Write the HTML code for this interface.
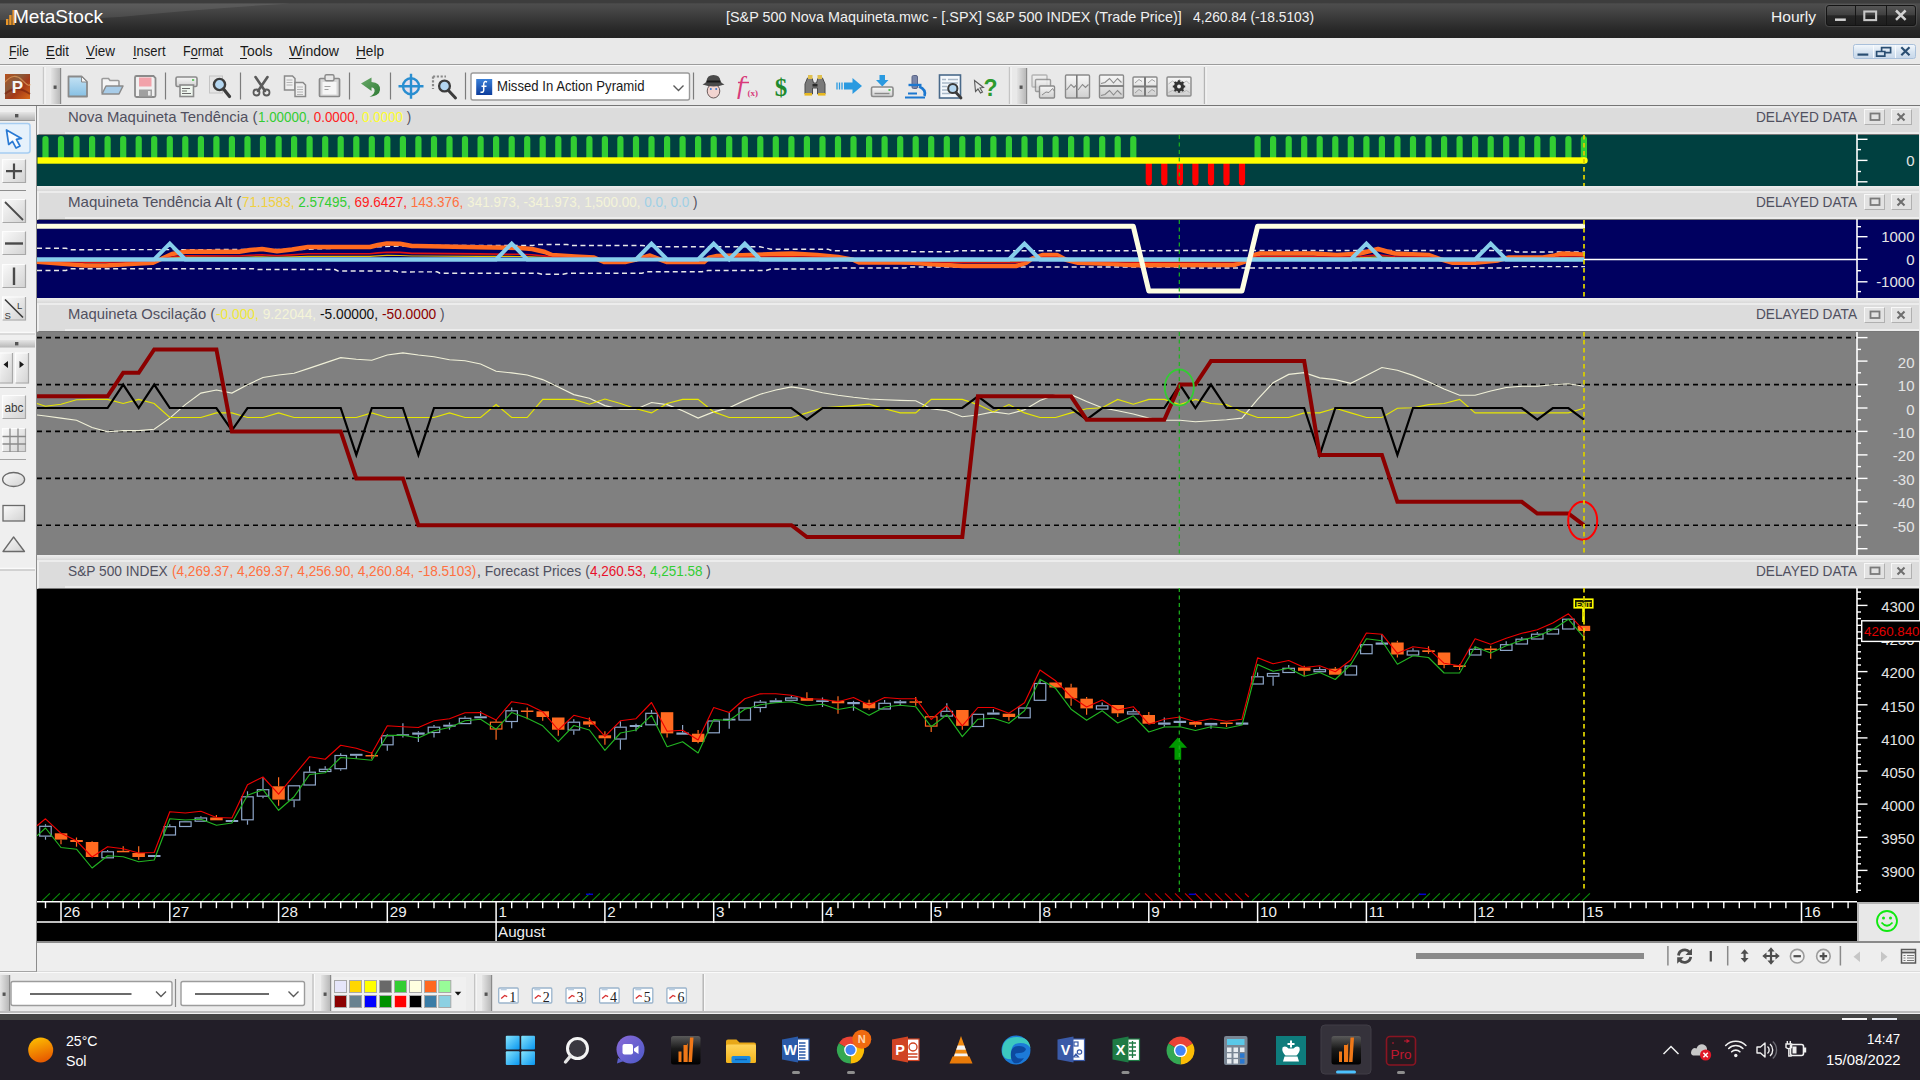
<!DOCTYPE html><html><head><meta charset="utf-8"><title>MetaStock</title><style>.fit{position:absolute;white-space:nowrap;transform-origin:0 50%;line-height:1.15}
*{box-sizing:border-box}
html,body{margin:0;padding:0}
body{width:1920px;height:1080px;overflow:hidden;background:#f0f0f0;font-family:"Liberation Sans",sans-serif;position:relative}
.abs{position:absolute}
#title{left:0;top:0;width:1920px;height:38px;background:linear-gradient(#3d3d3d 0,#3d3d3d 2.5px,#4d4d4d 4px,#474747 9px,#3b3b3b 17px,#303030 24px,#282828 30px,#232323 38px)}
#menu{left:0;top:38px;width:1920px;height:26.6px;background:#e9e9e9;border-bottom:1.3px solid #9c9c9c}
#menu u{text-decoration:underline;text-underline-offset:2px}
#tb{left:0;top:64.6px;width:1920px;height:41.4px;background:#e9e9e9;border-top:1px solid #f8f8f8;border-bottom:1.8px solid #757575}
#left{left:0;top:105.5px;width:37px;height:866px;background:#efefef;border-right:1.6px solid #8c8c8c;border-bottom:1px solid #a4a4a4}
.ph{left:37px;width:1881.5px;background:#dcdcdc}
.phi{left:37px;width:1881.5px;height:28.8px;background:#dcdcdc;border-top:2px solid #ececec;border-left:2px solid #efefef;border-bottom:1px solid #787878}
.phi i{position:absolute;left:26px;right:0;bottom:0;height:1.6px;background:#ececec}
.pbtn{position:absolute;top:4px;width:21px;height:16px;border:1px solid #f8f8f8;border-right-color:#b0b0b0;border-bottom-color:#b0b0b0;background:#e2e2e2}
.pb{left:37px;width:1881.5px}
#task{left:0;top:1019px;width:1920px;height:61px;background:#221e28}
</style></head><body><div id="title" class="abs"><svg class="abs" style="left:0;top:0" width="300" height="38"><path d="M0 3.5H290Q200 9 120 17Q60 21 0 20Z" fill="#fff" opacity="0.085"/></svg><svg class="abs" style="left:6px;top:10px" width="10" height="15"><rect x="0" y="9" width="2.4" height="6" fill="#e8962a"/><rect x="3.2" y="5" width="2.4" height="10" fill="#e8962a"/><rect x="6.4" y="0" width="2.4" height="15" fill="#e8962a"/></svg><span id="t_ms" class="fit" style="left:12.5px;top:5.5px;font-size:19.00px;color:#fff;transform:scaleX(1.0026);">MetaStock</span><span id="t_ttl" class="fit" style="left:726.0px;top:8.5px;font-size:14.50px;color:#f0f0f0;transform:scaleX(0.9909);">[S&amp;P 500 Nova Maquineta.mwc - [.SPX] S&amp;P 500 INDEX (Trade Price)]</span><span id="t_ttl2" class="fit" style="left:1193.3px;top:8.5px;font-size:14.50px;color:#f0f0f0;transform:scaleX(0.9500);">4,260.84 (-18.5103)</span><span id="t_hr" class="fit" style="left:1771.0px;top:8.5px;font-size:14.50px;color:#f0f0f0;transform:scaleX(1.0738);">Hourly</span><div class="abs" style="left:1826.3px;top:5.3px;width:89.4px;height:20.8px;background:linear-gradient(#565656,#404040 45%,#262626 52%,#1e1e1e);border:1px solid #141414;border-radius:3px;box-shadow:0 0 0 1px rgba(110,110,110,.35)"></div><div class="abs" style="left:1855px;top:6.3px;width:1.2px;height:19px;background:#161616"></div><div class="abs" style="left:1885.6px;top:6.3px;width:1.2px;height:19px;background:#161616"></div><svg class="abs" style="left:1826px;top:5px" width="90" height="22"><path d="M9 14.7H19.800" stroke="#d2d2d2" stroke-width="2.500"/><rect x="38.300" y="6.500" width="11.800" height="8.600" fill="none" stroke="#c8c8c8" stroke-width="2.100"/><path d="M70 5.500L79.600 14.800M79.600 5.500L70 14.800" stroke="#d2d2d2" stroke-width="2.500"/></svg></div><div id="menu" class="abs"><span id="m_File" class="fit" style="left:9.0px;top:4.5px;font-size:14.50px;color:#1a1a1a;transform:scaleX(0.8556);"><u>F</u>ile</span><span id="m_Edit" class="fit" style="left:46.0px;top:4.5px;font-size:14.50px;color:#1a1a1a;transform:scaleX(0.9200);"><u>E</u>dit</span><span id="m_View" class="fit" style="left:86.0px;top:4.5px;font-size:14.50px;color:#1a1a1a;transform:scaleX(0.9299);"><u>V</u>iew</span><span id="m_Insert" class="fit" style="left:132.5px;top:4.5px;font-size:14.50px;color:#1a1a1a;transform:scaleX(0.8958);"><u>I</u>nsert</span><span id="m_Format" class="fit" style="left:183.0px;top:4.5px;font-size:14.50px;color:#1a1a1a;transform:scaleX(0.8707);">F<u>o</u>rmat</span><span id="m_Tools" class="fit" style="left:240.0px;top:4.5px;font-size:14.50px;color:#1a1a1a;transform:scaleX(0.9599);"><u>T</u>ools</span><span id="m_Window" class="fit" style="left:289.0px;top:4.5px;font-size:14.50px;color:#1a1a1a;transform:scaleX(0.9694);"><u>W</u>indow</span><span id="m_Help" class="fit" style="left:356.0px;top:4.5px;font-size:14.50px;color:#1a1a1a;transform:scaleX(0.9382);"><u>H</u>elp</span><div class="abs" style="left:1852.5px;top:6.2px;width:63.4px;height:15.2px;border:1px solid #a9c0da;border-radius:2.5px;background:linear-gradient(#f2f7fc,#d6e3f0 55%,#c8d8ea)"></div><div class="abs" style="left:1872.6px;top:7.2px;width:1px;height:13.2px;background:#f8fbfe"></div><div class="abs" style="left:1895px;top:7.2px;width:1px;height:13.2px;background:#f8fbfe"></div><svg class="abs" style="left:1852px;top:6px" width="66" height="16"><path d="M5.500 10.600H16.300" stroke="#2a4e72" stroke-width="2.200"/><path d="M24.600 7.500h8.200v4.600h-8.200z M29.600 7V3.600h9v5h-5.300" fill="none" stroke="#2a4e72" stroke-width="1.700"/><path d="M49.300 3.300L57.500 11.200M57.500 3.300L49.300 11.200" stroke="#2a4e72" stroke-width="2.200"/></svg></div><div id="tb" class="abs"></div><svg class="abs" style="left:0;top:65px" width="1920" height="40" viewBox="0 65 1920 40"><defs><linearGradient id="gP" x1="0" y1="0" x2="1" y2="1"><stop offset="0" stop-color="#b8501c"/><stop offset="0.35" stop-color="#8a5a3a"/><stop offset="0.6" stop-color="#a43818"/><stop offset="1" stop-color="#d86a1a"/></linearGradient><linearGradient id="gGrip" x1="0" y1="0" x2="1" y2="0"><stop offset="0" stop-color="#e4e4e4"/><stop offset="1" stop-color="#b8b8b8"/></linearGradient><linearGradient id="gBlue" x1="0" y1="0" x2="0" y2="1"><stop offset="0" stop-color="#c4e2f4"/><stop offset="1" stop-color="#86c0e4"/></linearGradient><linearGradient id="gGray" x1="0" y1="0" x2="0" y2="1"><stop offset="0" stop-color="#f8f8f8"/><stop offset="1" stop-color="#cfcfcf"/></linearGradient><linearGradient id="gGreen" x1="0" y1="0" x2="1" y2="1"><stop offset="0" stop-color="#6aaa6a"/><stop offset="1" stop-color="#2e7a34"/></linearGradient><linearGradient id="gF" x1="0" y1="0" x2="0" y2="1"><stop offset="0" stop-color="#3a80d8"/><stop offset="1" stop-color="#0c3c9c"/></linearGradient></defs><rect x="5" y="74" width="25" height="25" fill="url(#gP)"/><path d="M5 82Q14 72 22 80T30 84" fill="none" stroke="#e0a060" stroke-width="1.2" opacity=".7"/><path d="M5 94Q16 84 30 94" fill="none" stroke="#7a2410" stroke-width="2" opacity=".7"/><text x="17.5" y="93" font-size="17" font-weight="bold" fill="#f4f4f4" text-anchor="middle" font-family="Liberation Sans">P</text><path d="M43.5 67V104" stroke="#c8c8c8" stroke-width="1.4"/><path d="M45 67V104" stroke="#fafafa" stroke-width="1"/><rect x="51" y="68" width="9" height="36" fill="url(#gGrip)"/><rect x="53.6" y="85.5" width="3" height="3.4" fill="#555"/><path d="M60.6 68V104" stroke="#8a8a8a" stroke-width="1.2"/><path d="M68.5 76.5h13l5.5 5.5v14.5h-18.5z" fill="url(#gBlue)" stroke="#8a8a8a" stroke-width="1.8" stroke-linejoin="round"/><path d="M81.5 76.5v5.5h5.5z" fill="#f4f4f4" stroke="#8a8a8a" stroke-width="1"/><path d="M102 93V79.5q0-1 1-1h5.5l1.5 2h8q1 0 1 1V86" fill="#f4f4f4" stroke="#9a9a9a" stroke-width="1.6"/><path d="M102 94l4-8h17l-4 8z" fill="#a8cce8" stroke="#8a8a8a" stroke-width="1.5" stroke-linejoin="round"/><path d="M135 77.5q0-1.5 1.5-1.5h17l2 2v17.5q0 1.5-1.5 1.5h-17.5q-1.5 0-1.5-1.5z" fill="#f0f0f0" stroke="#8a8a8a" stroke-width="1.8"/><rect x="139" y="77.5" width="12.5" height="9" fill="#f2a2aa"/><rect x="139" y="89.5" width="13" height="7" fill="#a0a0a0"/><rect x="148" y="91" width="2.5" height="4.5" fill="#e8e8e8"/><path d="M165.5 72.5V99.5" stroke="#7c7c7c" stroke-width="1.2"/><rect x="176" y="77" width="21" height="9.5" rx="1.5" fill="url(#gGray)" stroke="#8a8a8a" stroke-width="1.6"/><rect x="180" y="85" width="13.5" height="11.5" fill="#eef6ee" stroke="#8a8a8a" stroke-width="1.6"/><path d="M182 88.5h8M182 91h5M182 93.5h9" stroke="#6a6a6a" stroke-width="1.1"/><rect x="192" y="79" width="2.2" height="2" fill="#6cc46c"/><rect x="209.5" y="76" width="13" height="17" fill="#e4e4e4" stroke="#c4c4c4" stroke-width="1"/><circle cx="219.5" cy="84.5" r="5.6" fill="#b4d6f0" stroke="#3c3c3c" stroke-width="2.4"/><path d="M223.5 89L229.5 96.5" stroke="#3c3c3c" stroke-width="3.2" stroke-linecap="round"/><path d="M240.5 72.5V99.5" stroke="#7c7c7c" stroke-width="1.2"/><path d="M255.5 77L265 91M267.5 77L258 91" stroke="#5a5a5a" stroke-width="2.6" stroke-linecap="round"/><circle cx="256.5" cy="92.5" r="3" fill="none" stroke="#5a5a5a" stroke-width="1.8"/><circle cx="266.5" cy="92.5" r="3" fill="none" stroke="#5a5a5a" stroke-width="1.8"/><path d="M284.5 76h8l2.5 2.5v11.5h-10.5z" fill="#efefef" stroke="#8a8a8a" stroke-width="1.5"/><path d="M286.5 80h6M286.5 82.5h6M286.5 85h6" stroke="#b4b4b4" stroke-width="1"/><path d="M295 82.5h8l2.5 2.5v11.5h-10.5z" fill="#efefef" stroke="#8a8a8a" stroke-width="1.5"/><path d="M297 87h6M297 89.500h6M297 92h6M297 94.500h6" stroke="#b4b4b4" stroke-width="1"/><rect x="319.500" y="78.500" width="20" height="18" rx="1" fill="#d8d8d8" stroke="#8a8a8a" stroke-width="1.7"/><rect x="322.500" y="82" width="14" height="12.500" fill="#f6f6f6"/><rect x="325" y="74.800" width="9" height="6" rx="1.5" fill="#e8e8e8" stroke="#8a8a8a" stroke-width="1.4"/><path d="M324.500 86.500h6M324.500 89.500h4" stroke="#a0a0a0" stroke-width="1.1"/><path d="M349.5 72.5V99.5" stroke="#7c7c7c" stroke-width="1.2"/><path d="M361 83.500L371.500 77.500V82Q380.500 82.500 380 90Q379.500 95.500 369.500 97Q375.500 93.500 374.500 89.500Q373.500 87 371.500 87.500V91Z" fill="url(#gGreen)"/><path d="M390.5 72.5V99.5" stroke="#7c7c7c" stroke-width="1.2"/><circle cx="411" cy="86.300" r="8" fill="#e8e0ec" stroke="#2a8ed0" stroke-width="2.400"/><path d="M411 73.800V98.800M398.500 86.300H423.500" stroke="#2a8ed0" stroke-width="2.400"/><path d="M433 76.500h13M433 76.500v12.500" stroke="#8a8a8a" stroke-width="2.200" stroke-dasharray="2.200 1.600"/><circle cx="444.500" cy="86" r="5.400" fill="#b4d6f0" stroke="#3c3c3c" stroke-width="2.300"/><path d="M448.500 90.500L455.500 98" stroke="#3c3c3c" stroke-width="3" stroke-linecap="round"/><path d="M465.5 72.5V99.5" stroke="#7c7c7c" stroke-width="1.2"/><rect x="471" y="73" width="218.500" height="27" rx="2" fill="#fff" stroke="#9a9a9a" stroke-width="1.400"/><rect x="476.200" y="79" width="16" height="16" fill="url(#gF)"/><path d="M487 82Q483.500 80.500 483.700 85V90Q483.700 93 480.500 92M481.500 86.300h5" fill="none" stroke="#fff" stroke-width="1.500"/><path d="M673.500 85.500L678.500 90.500L683.500 85.500" fill="none" stroke="#5a5a5a" stroke-width="1.400"/><path d="M693.5 72.5V99.5" stroke="#7c7c7c" stroke-width="1.2"/><ellipse cx="713.500" cy="91" rx="6.300" ry="7" fill="#f2d4d0" stroke="#6a5a5a" stroke-width="1"/><path d="M702.500 84.500Q713.500 88.500 724.500 84.500Q721 83 720.500 81Q720 75 713.500 75Q707 75 706.500 81Q706 83 702.500 84.500Z" fill="#4a4a4a"/><path d="M706.800 81.500h13.500" stroke="#1a1a1a" stroke-width="2"/><circle cx="710.800" cy="89" r="1" fill="#3a7ad0"/><circle cx="716.200" cy="89" r="1" fill="#3a7ad0"/><text x="737" y="94" font-size="26" font-style="italic" fill="#d83a7a" font-family="Liberation Serif">f</text><text x="747.500" y="96" font-size="9" font-weight="bold" fill="#d83a7a" font-family="Liberation Serif">(x)</text><path d="M738 82.500h11" stroke="#d83a7a" stroke-width="1.500"/><text x="781" y="95.500" font-size="25" font-weight="bold" fill="#1e8a2e" text-anchor="middle" font-family="Liberation Serif">$</text><path d="M805 94V84l2.500-6h4.500l1.500 5h3l1.500-5h4.500l2.500 6v10h-7.500v-6h-5v6z" fill="#7a7a7a" stroke="#4a4a4a" stroke-width="1"/><rect x="808" y="75" width="4.500" height="4" fill="#e0c050"/><rect x="817.500" y="75" width="4.500" height="4" fill="#e0c050"/><rect x="804.500" y="93" width="7.500" height="2.600" fill="#e8b820"/><rect x="818" y="93" width="7.500" height="2.600" fill="#e8b820"/><rect x="812.500" y="84" width="5" height="2.500" fill="#2a2a2a"/><path d="M844 82.500h8.500v-4.500l9.500 8l-9.500 8v-4.500h-8.500z" fill="#2a9ae0"/><path d="M837 82.500v7M839.500 82.500v7M842 82.500v7" stroke="#2a9ae0" stroke-width="1.300"/><path d="M879.500 75h5.500v5h3.500l-6.200 6.500l-6.300-6.500h3.500z" fill="#2a9ae0"/><rect x="871.500" y="87" width="21.500" height="9.500" rx="1.500" fill="url(#gGray)" stroke="#8a8a8a" stroke-width="1.600"/><path d="M874.500 93.500h15" stroke="#8a8a8a" stroke-width="1.400"/><rect x="888.500" y="89" width="2" height="2" fill="#5cc45c"/><rect x="912" y="75.500" width="5.500" height="13" rx="1.500" fill="#7a86a8" stroke="#5a6488" stroke-width="1"/><path d="M908.500 85h13" stroke="#1c78d0" stroke-width="2.400"/><path d="M919 86.500Q926.500 89.500 924.500 96" fill="none" stroke="#1c78d0" stroke-width="2.600"/><path d="M905 97.500h20M908 93.500h9" stroke="#1c78d0" stroke-width="2.200"/><rect x="939.500" y="75" width="21" height="23" fill="#f4f8fc" stroke="#4a6a8a" stroke-width="1.600"/><path d="M942 79.500h4M948 79.500h10M942 83h16M942 86.500h5M942 90h6M942 93.500h8" stroke="#a8b8c8" stroke-width="1.300"/><circle cx="952.800" cy="88.500" r="4.600" fill="#b4d6f0" stroke="#3c3c3c" stroke-width="2"/><path d="M956 92.500L961 98" stroke="#3c3c3c" stroke-width="2.800" stroke-linecap="round"/><path d="M974.500 80.500l1 11l2.500-2.500l2.500 4l2-1l-2.500-4l3.500-.5z" fill="#e8e8e8" stroke="#5a5a5a" stroke-width="1.100"/><text x="990.500" y="96" font-size="23" font-weight="bold" fill="#2e9a2e" text-anchor="middle" font-family="Liberation Sans">?</text><path d="M1009.500 67V104" stroke="#c4c4c4" stroke-width="1.400"/><path d="M1011 67V104" stroke="#fafafa" stroke-width="1"/><rect x="1017" y="68" width="9" height="36" fill="url(#gGrip)"/><rect x="1019.6" y="85.5" width="3" height="3.4" fill="#555"/><path d="M1026.6 68V104" stroke="#8a8a8a" stroke-width="1.2"/><rect x="1032.0" y="75.0" width="15.0" height="12.0" rx="1" fill="url(#gGray)" stroke="#8a8a8a" stroke-width="1.400" opacity="0.55"/><rect x="1035.5" y="79.5" width="15.0" height="12.0" rx="1" fill="url(#gGray)" stroke="#8a8a8a" stroke-width="1.400" opacity="0.80"/><rect x="1039.5" y="86.0" width="15.0" height="12.0" rx="1" fill="url(#gGray)" stroke="#8a8a8a" stroke-width="1.400" opacity="1.00"/><path d="M1042 95l4-3l3 .5l3.500-4l2 3" fill="none" stroke="#8a8a8a" stroke-width="1"/><rect x="1065.5" y="75.0" width="24.0" height="23.0" rx="1" fill="url(#gGray)" stroke="#8a8a8a" stroke-width="1.400" opacity="1.00"/><path d="M1076.800 75v23" stroke="#7a7a7a" stroke-width="1.600"/><path d="M1066.500 90l4.500-5.500l3 3l2.500-2.500M1078 90l4.500-5.500l3 3l3-3" fill="none" stroke="#8a8a8a" stroke-width="1.100"/><rect x="1099.5" y="75.0" width="24.0" height="23.0" rx="1" fill="url(#gGray)" stroke="#8a8a8a" stroke-width="1.400" opacity="1.00"/><path d="M1099.500 86h24" stroke="#7a7a7a" stroke-width="1.800"/><path d="M1101 83.500l4-1l4.500-4l4 4.500l4-4.500l4 4M1101 95.500l4-1l4.500-4l4 4.500l4-4.500l4 4" fill="none" stroke="#8a8a8a" stroke-width="1.100"/><rect x="1133.0" y="77.0" width="24.0" height="19.0" rx="1" fill="url(#gGray)" stroke="#8a8a8a" stroke-width="1.400" opacity="1.00"/><path d="M1145 77v19M1133 86.500h24" stroke="#7a7a7a" stroke-width="2"/><path d="M1135 83l4-3.500l3 2M1148 83l4-3.500l3 2M1135 93l4-3.500l3 2M1148 93l4-3.500l3 2" fill="none" stroke="#a0a0a0" stroke-width="1"/><rect x="1167.0" y="77.0" width="24.0" height="19.0" rx="1" fill="url(#gGray)" stroke="#8a8a8a" stroke-width="1.400" opacity="1.00"/><path d="M1168.5 84l4-3l3 2l4-3.500l4 3.500l3-2l3 3M1168.5 92.5l4-2l3 1.5h8l3-1.5l3 2" fill="none" stroke="#b4b4b4" stroke-width="1"/><circle cx="1179" cy="86.500" r="3.800" fill="none" stroke="#333" stroke-width="2.600"/><path d="M1179 80.300v12.400M1172.800 86.500h12.400M1174.600 82.100l8.800 8.800M1183.400 82.100l-8.800 8.800" stroke="#333" stroke-width="2.100"/><circle cx="1179" cy="86.500" r="1.900" fill="#ececec"/><path d="M1204.500 67V104" stroke="#b4b4b4" stroke-width="1.400"/><path d="M1206 67V104" stroke="#fafafa" stroke-width="1"/></svg><span id="cb" class="fit" style="left:496.5px;top:78.0px;font-size:14.50px;color:#1a1a1a;transform:scaleX(0.9060);">Missed In Action Pyramid</span><div id="left" class="abs"></div><svg class="abs" style="left:0;top:105px" width="37" height="867" viewBox="0 105 37 867"><defs><linearGradient id="gBtn" x1="0" y1="0" x2="1" y2="1"><stop offset="0" stop-color="#fafafa"/><stop offset="1" stop-color="#d2d2d2"/></linearGradient><linearGradient id="gGr2" x1="0" y1="0" x2="0" y2="1"><stop offset="0" stop-color="#e6e6e6"/><stop offset="1" stop-color="#b6b6b6"/></linearGradient></defs><rect x="0" y="112" width="35" height="8" fill="url(#gGr2)"/><rect x="15" y="114" width="3.400" height="3.400" fill="#555"/><path d="M0 120.500H35" stroke="#9a9a9a" stroke-width="1"/><rect x="-2" y="123.500" width="32" height="29.500" rx="2.500" fill="#e6f1fb" stroke="#a6cdf2" stroke-width="1.500"/><path d="M6.500 130l2.200 14.500l3.800-3.200l3.600 6.800l3.900-2.100l-3.600-6.600l5.100-1z" fill="#f8fcff" stroke="#2a7ad4" stroke-width="1.700" stroke-linejoin="round"/><rect x="2.0" y="159.0" width="24.0" height="24.0" fill="url(#gBtn)"/><path d="M2.5 183.0V159.5H26.0" fill="none" stroke="#fdfdfd" stroke-width="1.2"/><path d="M2.5 182.5H25.5V159.5" fill="none" stroke="#a8a8a8" stroke-width="1.2"/><path d="M14 163.500v15.500M6 171.200h16" stroke="#4a4a4a" stroke-width="2.200"/><path d="M0 190.500H26" stroke="#8e8e8e" stroke-width="1"/><rect x="2.0" y="199.0" width="24.0" height="24.0" fill="url(#gBtn)"/><path d="M2.5 223.0V199.5H26.0" fill="none" stroke="#fdfdfd" stroke-width="1.2"/><path d="M2.5 222.5H25.5V199.5" fill="none" stroke="#a8a8a8" stroke-width="1.2"/><path d="M5 202l18 18" stroke="#4a4a4a" stroke-width="1.800"/><rect x="2.0" y="231.0" width="24.0" height="24.0" fill="url(#gBtn)"/><path d="M2.5 255.0V231.5H26.0" fill="none" stroke="#fdfdfd" stroke-width="1.2"/><path d="M2.5 254.5H25.5V231.5" fill="none" stroke="#a8a8a8" stroke-width="1.2"/><path d="M5 243.500h18" stroke="#4a4a4a" stroke-width="2.400"/><rect x="2.0" y="264.0" width="24.0" height="24.0" fill="url(#gBtn)"/><path d="M2.5 288.0V264.5H26.0" fill="none" stroke="#fdfdfd" stroke-width="1.2"/><path d="M2.5 287.5H25.5V264.5" fill="none" stroke="#a8a8a8" stroke-width="1.2"/><path d="M14 267.500v17.500" stroke="#4a4a4a" stroke-width="2.400"/><rect x="2.0" y="296.5" width="24.0" height="24.0" fill="url(#gBtn)"/><path d="M2.5 320.5V297.0H26.0" fill="none" stroke="#fdfdfd" stroke-width="1.2"/><path d="M2.5 320.0H25.5V297.0" fill="none" stroke="#a8a8a8" stroke-width="1.2"/><path d="M5 299.500l18 18" stroke="#3a3a3a" stroke-width="1.600"/><text x="4.500" y="319" font-size="9.500" fill="#3a3a3a" font-family="Liberation Sans">S</text><text x="17" y="308.500" font-size="9.500" fill="#3a3a3a" font-family="Liberation Sans">L</text><path d="M0 332.500H35" stroke="#fafafa" stroke-width="1.400"/><path d="M0 334H35" stroke="#c4c4c4" stroke-width="1"/><rect x="0" y="340" width="35" height="7.500" fill="url(#gGr2)"/><rect x="15" y="342" width="3.400" height="3.400" fill="#555"/><rect x="-1.0" y="352.5" width="14.0" height="31.0" fill="url(#gBtn)"/><path d="M-0.5 383.5V353.0H13.0" fill="none" stroke="#fdfdfd" stroke-width="1.2"/><path d="M-0.5 383.0H12.5V353.0" fill="none" stroke="#a8a8a8" stroke-width="1.2"/><rect x="15.0" y="352.5" width="14.0" height="31.0" fill="url(#gBtn)"/><path d="M15.5 383.5V353.0H29.0" fill="none" stroke="#fdfdfd" stroke-width="1.2"/><path d="M15.5 383.0H28.5V353.0" fill="none" stroke="#a8a8a8" stroke-width="1.2"/><path d="M8 368l-4.500-3.500l4.500-3.500zM19.500 361l4.500 3.500l-4.500 3.500z" fill="#1a1a1a"/><path d="M0 387.500H26" stroke="#a4a4a4" stroke-width="1"/><rect x="2.0" y="395.0" width="24.0" height="24.0" fill="url(#gBtn)"/><path d="M2.5 419.0V395.5H26.0" fill="none" stroke="#fdfdfd" stroke-width="1.2"/><path d="M2.5 418.5H25.5V395.5" fill="none" stroke="#a8a8a8" stroke-width="1.2"/><text x="14" y="412" font-size="12.500" fill="#3a3a3a" text-anchor="middle" font-family="Liberation Sans" textLength="19" lengthAdjust="spacingAndGlyphs">abc</text><rect x="2.0" y="428.0" width="24.0" height="24.0" fill="url(#gBtn)"/><path d="M2.5 452.0V428.5H26.0" fill="none" stroke="#fdfdfd" stroke-width="1.2"/><path d="M2.5 451.5H25.5V428.5" fill="none" stroke="#a8a8a8" stroke-width="1.2"/><path d="M10 428.500v23.500M18 428.500v23.500M2.500 436.500h23.500M2.500 444h23.500" stroke="#8a8a8a" stroke-width="1.300"/><path d="M0 459.500H26" stroke="#a4a4a4" stroke-width="1"/><ellipse cx="13.600" cy="479.500" rx="11" ry="7" fill="url(#gBtn)" stroke="#6a6a6a" stroke-width="1.300"/><rect x="3" y="505.500" width="21.500" height="15.500" fill="url(#gBtn)" stroke="#6a6a6a" stroke-width="1.300"/><path d="M13.600 537L24.500 551.500H3Z" fill="url(#gBtn)" stroke="#6a6a6a" stroke-width="1.300" stroke-linejoin="round"/><path d="M0 568.500H35" stroke="#fafafa" stroke-width="1.400"/><path d="M0 570H35" stroke="#b4b4b4" stroke-width="1"/></svg><div class="abs pb" style="top:134.8px;height:51px;background:#004040"></div><div class="abs pb" style="top:220px;height:78px;background:#000060"></div><div class="abs pb" style="top:332px;height:222.600px;background:#808080"></div><div class="abs pb" style="top:588.6px;height:354.4px;background:#000;width:1882px"></div><div class="abs" style="left:1857.3px;top:901.8px;width:62px;height:40.6px;background:#e8e8e8;border-top:2px solid #b2b2b2;border-left:2.2px solid #b8b8b8"></div><svg class="abs" style="left:1874px;top:908px" width="26" height="26"><circle cx="13" cy="13" r="10" fill="none" stroke="#10e810" stroke-width="1.8"/><circle cx="9.5" cy="10" r="1.5" fill="#10e810"/><circle cx="16.5" cy="10" r="1.5" fill="#10e810"/><path d="M7.5 14.5Q13 21 18.5 14.5" fill="none" stroke="#10e810" stroke-width="1.8"/></svg><div class="abs" style="left:1918.6px;top:106px;width:1.4px;height:796px;background:#ececec"></div><div class="abs" style="left:37px;top:941px;width:1883px;height:2px;background:#8a8a8a"></div><div class="abs" style="left:37px;top:943px;width:1883px;height:29px;background:#eeeeee;border-bottom:1px solid #dcdcdc"></div><div class="abs" style="left:1416px;top:953px;width:228px;height:6px;background:#8a8a8a"></div><div class="abs phi" style="top:106px"><i></i></div><span id="h1_0" class="fit" style="left:67.9px;top:108.7px;font-size:14.50px;color:#50505f;transform:scaleX(1.0275);">Nova Maquineta Tend&ecirc;ncia (</span><span id="h1_1" class="fit" style="left:258.4px;top:108.7px;font-size:14.50px;color:#50505f;transform:scaleX(0.9222);"><span style="color:#32cd32">1.00000,</span> <span style="color:#ff2020">0.0000,</span> <span style="color:#ffff30">0.0000</span> )</span><span id="d1" class="fit" style="left:1755.5px;top:108.7px;font-size:14.50px;color:#50505f;transform:scaleX(0.9424);">DELAYED DATA</span><div class="pbtn" style="left:1864px;top:109.0px"></div><div class="pbtn" style="left:1891px;top:109.0px"></div><svg class="abs" style="left:1864px;top:109.0px" width="50" height="16"><rect x="6.500" y="4.500" width="9" height="6.500" fill="none" stroke="#7a7a7a" stroke-width="1.800"/><path d="M33.500 4.500L40.500 11.500M40.500 4.500L33.500 11.500" stroke="#6e6e6e" stroke-width="2"/></svg><div class="abs ph" style="top:186.0px;height:5.2px;background:linear-gradient(#ededed,#e4e4e4 50%,#d8d8d8)"></div><div class="abs phi" style="top:191.2px"><i></i></div><span id="h2_0" class="fit" style="left:67.9px;top:194.0px;font-size:14.50px;color:#50505f;transform:scaleX(1.0408);">Maquineta Tend&ecirc;ncia Alt (</span><span id="h2_1" class="fit" style="left:242.0px;top:194.0px;font-size:14.50px;color:#50505f;transform:scaleX(0.9305);"><span style="color:#f0d040">71.1583,</span> <span style="color:#32cd32">2.57495,</span> <span style="color:#ff2020">69.6427,</span> <span style="color:#ff7040">143.376,</span> <span style="color:#f4f4d8">341.973,</span> <span style="color:#f4f4d8">-341.973,</span> <span style="color:#f4f4d8">1,500.00,</span> <span style="color:#9fd0e6">0.0,</span> <span style="color:#9fd0e6">0.0</span> )</span><span id="d2" class="fit" style="left:1755.5px;top:194.0px;font-size:14.50px;color:#50505f;transform:scaleX(0.9424);">DELAYED DATA</span><div class="pbtn" style="left:1864px;top:194.3px"></div><div class="pbtn" style="left:1891px;top:194.3px"></div><svg class="abs" style="left:1864px;top:194.3px" width="50" height="16"><rect x="6.500" y="4.500" width="9" height="6.500" fill="none" stroke="#7a7a7a" stroke-width="1.800"/><path d="M33.500 4.500L40.500 11.500M40.500 4.500L33.500 11.500" stroke="#6e6e6e" stroke-width="2"/></svg><div class="abs ph" style="top:298.0px;height:5.2px;background:linear-gradient(#ededed,#e4e4e4 50%,#d8d8d8)"></div><div class="abs phi" style="top:303.2px"><i></i></div><span id="h3_0" class="fit" style="left:67.9px;top:306.2px;font-size:14.50px;color:#50505f;transform:scaleX(1.0210);">Maquineta Oscila&ccedil;&atilde;o (</span><span id="h3_1" class="fit" style="left:215.8px;top:306.2px;font-size:14.50px;color:#50505f;transform:scaleX(0.9482);"><span style="color:#f0e83a">-0.000,</span> <span style="color:#f4f4d8">9.22044,</span> <span style="color:#111">-5.00000,</span> <span style="color:#8b0000">-50.0000</span> )</span><span id="d3" class="fit" style="left:1755.5px;top:306.2px;font-size:14.50px;color:#50505f;transform:scaleX(0.9424);">DELAYED DATA</span><div class="pbtn" style="left:1864px;top:306.5px"></div><div class="pbtn" style="left:1891px;top:306.5px"></div><svg class="abs" style="left:1864px;top:306.5px" width="50" height="16"><rect x="6.500" y="4.500" width="9" height="6.500" fill="none" stroke="#7a7a7a" stroke-width="1.800"/><path d="M33.500 4.500L40.500 11.500M40.500 4.500L33.500 11.500" stroke="#6e6e6e" stroke-width="2"/></svg><div class="abs ph" style="top:554.6px;height:5.2px;background:linear-gradient(#ededed,#e4e4e4 50%,#d8d8d8)"></div><div class="abs phi" style="top:559.8px"><i></i></div><span id="h4_0" class="fit" style="left:67.6px;top:562.7px;font-size:14.50px;color:#50505f;transform:scaleX(0.9466);">S&amp;P 500 INDEX</span><span id="h4_1" class="fit" style="left:171.7px;top:562.7px;font-size:14.50px;color:#50505f;transform:scaleX(0.9366);"><span style="color:#ff7040">(4,269.37, 4,269.37, 4,256.90, 4,260.84, -18.5103)</span></span><span id="h4_2" class="fit" style="left:476.6px;top:562.7px;font-size:14.50px;color:#50505f;transform:scaleX(0.9589);">, Forecast Prices (</span><span id="h4_3" class="fit" style="left:590.0px;top:562.7px;font-size:14.50px;color:#50505f;transform:scaleX(0.9297);"><span style="color:#e8102a">4,260.53,</span> <span style="color:#32cd32">4,251.58</span> )</span><span id="d4" class="fit" style="left:1755.5px;top:562.7px;font-size:14.50px;color:#50505f;transform:scaleX(0.9424);">DELAYED DATA</span><div class="pbtn" style="left:1864px;top:563.0px"></div><div class="pbtn" style="left:1891px;top:563.0px"></div><svg class="abs" style="left:1864px;top:563.0px" width="50" height="16"><rect x="6.500" y="4.500" width="9" height="6.500" fill="none" stroke="#7a7a7a" stroke-width="1.800"/><path d="M33.500 4.500L40.500 11.500M40.500 4.500L33.500 11.500" stroke="#6e6e6e" stroke-width="2"/></svg><svg width="1920" height="1080" style="position:absolute;left:0;top:0" shape-rendering="auto"><path d="M45.5 139V158" stroke="#32cd32" stroke-width="6.2" stroke-linecap="round"/><path d="M61.0 139V158" stroke="#32cd32" stroke-width="6.2" stroke-linecap="round"/><path d="M76.5 139V158" stroke="#32cd32" stroke-width="6.2" stroke-linecap="round"/><path d="M92.1 139V158" stroke="#32cd32" stroke-width="6.2" stroke-linecap="round"/><path d="M107.6 139V158" stroke="#32cd32" stroke-width="6.2" stroke-linecap="round"/><path d="M123.2 139V158" stroke="#32cd32" stroke-width="6.2" stroke-linecap="round"/><path d="M138.7 139V158" stroke="#32cd32" stroke-width="6.2" stroke-linecap="round"/><path d="M154.2 139V158" stroke="#32cd32" stroke-width="6.2" stroke-linecap="round"/><path d="M169.8 139V158" stroke="#32cd32" stroke-width="6.2" stroke-linecap="round"/><path d="M185.3 139V158" stroke="#32cd32" stroke-width="6.2" stroke-linecap="round"/><path d="M200.9 139V158" stroke="#32cd32" stroke-width="6.2" stroke-linecap="round"/><path d="M216.4 139V158" stroke="#32cd32" stroke-width="6.2" stroke-linecap="round"/><path d="M231.9 139V158" stroke="#32cd32" stroke-width="6.2" stroke-linecap="round"/><path d="M247.5 139V158" stroke="#32cd32" stroke-width="6.2" stroke-linecap="round"/><path d="M263.0 139V158" stroke="#32cd32" stroke-width="6.2" stroke-linecap="round"/><path d="M278.6 139V158" stroke="#32cd32" stroke-width="6.2" stroke-linecap="round"/><path d="M294.1 139V158" stroke="#32cd32" stroke-width="6.2" stroke-linecap="round"/><path d="M309.6 139V158" stroke="#32cd32" stroke-width="6.2" stroke-linecap="round"/><path d="M325.2 139V158" stroke="#32cd32" stroke-width="6.2" stroke-linecap="round"/><path d="M340.7 139V158" stroke="#32cd32" stroke-width="6.2" stroke-linecap="round"/><path d="M356.3 139V158" stroke="#32cd32" stroke-width="6.2" stroke-linecap="round"/><path d="M371.8 139V158" stroke="#32cd32" stroke-width="6.2" stroke-linecap="round"/><path d="M387.3 139V158" stroke="#32cd32" stroke-width="6.2" stroke-linecap="round"/><path d="M402.9 139V158" stroke="#32cd32" stroke-width="6.2" stroke-linecap="round"/><path d="M418.4 139V158" stroke="#32cd32" stroke-width="6.2" stroke-linecap="round"/><path d="M434.0 139V158" stroke="#32cd32" stroke-width="6.2" stroke-linecap="round"/><path d="M449.5 139V158" stroke="#32cd32" stroke-width="6.2" stroke-linecap="round"/><path d="M465.0 139V158" stroke="#32cd32" stroke-width="6.2" stroke-linecap="round"/><path d="M480.6 139V158" stroke="#32cd32" stroke-width="6.2" stroke-linecap="round"/><path d="M496.1 139V158" stroke="#32cd32" stroke-width="6.2" stroke-linecap="round"/><path d="M511.7 139V158" stroke="#32cd32" stroke-width="6.2" stroke-linecap="round"/><path d="M527.2 139V158" stroke="#32cd32" stroke-width="6.2" stroke-linecap="round"/><path d="M542.7 139V158" stroke="#32cd32" stroke-width="6.2" stroke-linecap="round"/><path d="M558.3 139V158" stroke="#32cd32" stroke-width="6.2" stroke-linecap="round"/><path d="M573.8 139V158" stroke="#32cd32" stroke-width="6.2" stroke-linecap="round"/><path d="M589.4 139V158" stroke="#32cd32" stroke-width="6.2" stroke-linecap="round"/><path d="M604.9 139V158" stroke="#32cd32" stroke-width="6.2" stroke-linecap="round"/><path d="M620.4 139V158" stroke="#32cd32" stroke-width="6.2" stroke-linecap="round"/><path d="M636.0 139V158" stroke="#32cd32" stroke-width="6.2" stroke-linecap="round"/><path d="M651.5 139V158" stroke="#32cd32" stroke-width="6.2" stroke-linecap="round"/><path d="M667.1 139V158" stroke="#32cd32" stroke-width="6.2" stroke-linecap="round"/><path d="M682.6 139V158" stroke="#32cd32" stroke-width="6.2" stroke-linecap="round"/><path d="M698.1 139V158" stroke="#32cd32" stroke-width="6.2" stroke-linecap="round"/><path d="M713.7 139V158" stroke="#32cd32" stroke-width="6.2" stroke-linecap="round"/><path d="M729.2 139V158" stroke="#32cd32" stroke-width="6.2" stroke-linecap="round"/><path d="M744.8 139V158" stroke="#32cd32" stroke-width="6.2" stroke-linecap="round"/><path d="M760.3 139V158" stroke="#32cd32" stroke-width="6.2" stroke-linecap="round"/><path d="M775.8 139V158" stroke="#32cd32" stroke-width="6.2" stroke-linecap="round"/><path d="M791.4 139V158" stroke="#32cd32" stroke-width="6.2" stroke-linecap="round"/><path d="M806.9 139V158" stroke="#32cd32" stroke-width="6.2" stroke-linecap="round"/><path d="M822.5 139V158" stroke="#32cd32" stroke-width="6.2" stroke-linecap="round"/><path d="M838.0 139V158" stroke="#32cd32" stroke-width="6.2" stroke-linecap="round"/><path d="M853.5 139V158" stroke="#32cd32" stroke-width="6.2" stroke-linecap="round"/><path d="M869.1 139V158" stroke="#32cd32" stroke-width="6.2" stroke-linecap="round"/><path d="M884.6 139V158" stroke="#32cd32" stroke-width="6.2" stroke-linecap="round"/><path d="M900.2 139V158" stroke="#32cd32" stroke-width="6.2" stroke-linecap="round"/><path d="M915.7 139V158" stroke="#32cd32" stroke-width="6.2" stroke-linecap="round"/><path d="M931.2 139V158" stroke="#32cd32" stroke-width="6.2" stroke-linecap="round"/><path d="M946.8 139V158" stroke="#32cd32" stroke-width="6.2" stroke-linecap="round"/><path d="M962.3 139V158" stroke="#32cd32" stroke-width="6.2" stroke-linecap="round"/><path d="M977.9 139V158" stroke="#32cd32" stroke-width="6.2" stroke-linecap="round"/><path d="M993.4 139V158" stroke="#32cd32" stroke-width="6.2" stroke-linecap="round"/><path d="M1008.9 139V158" stroke="#32cd32" stroke-width="6.2" stroke-linecap="round"/><path d="M1024.5 139V158" stroke="#32cd32" stroke-width="6.2" stroke-linecap="round"/><path d="M1040.0 139V158" stroke="#32cd32" stroke-width="6.2" stroke-linecap="round"/><path d="M1055.6 139V158" stroke="#32cd32" stroke-width="6.2" stroke-linecap="round"/><path d="M1071.1 139V158" stroke="#32cd32" stroke-width="6.2" stroke-linecap="round"/><path d="M1086.6 139V158" stroke="#32cd32" stroke-width="6.2" stroke-linecap="round"/><path d="M1102.2 139V158" stroke="#32cd32" stroke-width="6.2" stroke-linecap="round"/><path d="M1117.7 139V158" stroke="#32cd32" stroke-width="6.2" stroke-linecap="round"/><path d="M1133.3 139V158" stroke="#32cd32" stroke-width="6.2" stroke-linecap="round"/><path d="M1148.8 164V182.3" stroke="#ff0000" stroke-width="6.2" stroke-linecap="round"/><path d="M1164.3 164V182.3" stroke="#ff0000" stroke-width="6.2" stroke-linecap="round"/><path d="M1179.9 164V182.3" stroke="#ff0000" stroke-width="6.2" stroke-linecap="round"/><path d="M1195.4 164V182.3" stroke="#ff0000" stroke-width="6.2" stroke-linecap="round"/><path d="M1211.0 164V182.3" stroke="#ff0000" stroke-width="6.2" stroke-linecap="round"/><path d="M1226.5 164V182.3" stroke="#ff0000" stroke-width="6.2" stroke-linecap="round"/><path d="M1242.0 164V182.3" stroke="#ff0000" stroke-width="6.2" stroke-linecap="round"/><path d="M1257.6 139V158" stroke="#32cd32" stroke-width="6.2" stroke-linecap="round"/><path d="M1273.1 139V158" stroke="#32cd32" stroke-width="6.2" stroke-linecap="round"/><path d="M1288.7 139V158" stroke="#32cd32" stroke-width="6.2" stroke-linecap="round"/><path d="M1304.2 139V158" stroke="#32cd32" stroke-width="6.2" stroke-linecap="round"/><path d="M1319.7 139V158" stroke="#32cd32" stroke-width="6.2" stroke-linecap="round"/><path d="M1335.3 139V158" stroke="#32cd32" stroke-width="6.2" stroke-linecap="round"/><path d="M1350.8 139V158" stroke="#32cd32" stroke-width="6.2" stroke-linecap="round"/><path d="M1366.4 139V158" stroke="#32cd32" stroke-width="6.2" stroke-linecap="round"/><path d="M1381.9 139V158" stroke="#32cd32" stroke-width="6.2" stroke-linecap="round"/><path d="M1397.4 139V158" stroke="#32cd32" stroke-width="6.2" stroke-linecap="round"/><path d="M1413.0 139V158" stroke="#32cd32" stroke-width="6.2" stroke-linecap="round"/><path d="M1428.5 139V158" stroke="#32cd32" stroke-width="6.2" stroke-linecap="round"/><path d="M1444.1 139V158" stroke="#32cd32" stroke-width="6.2" stroke-linecap="round"/><path d="M1459.6 139V158" stroke="#32cd32" stroke-width="6.2" stroke-linecap="round"/><path d="M1475.1 139V158" stroke="#32cd32" stroke-width="6.2" stroke-linecap="round"/><path d="M1490.7 139V158" stroke="#32cd32" stroke-width="6.2" stroke-linecap="round"/><path d="M1506.2 139V158" stroke="#32cd32" stroke-width="6.2" stroke-linecap="round"/><path d="M1521.8 139V158" stroke="#32cd32" stroke-width="6.2" stroke-linecap="round"/><path d="M1537.3 139V158" stroke="#32cd32" stroke-width="6.2" stroke-linecap="round"/><path d="M1552.8 139V158" stroke="#32cd32" stroke-width="6.2" stroke-linecap="round"/><path d="M1568.4 139V158" stroke="#32cd32" stroke-width="6.2" stroke-linecap="round"/><path d="M1583.9 139V158" stroke="#32cd32" stroke-width="6.2" stroke-linecap="round"/><rect x="37.5" y="157.3" width="1547" height="6.4" fill="#ffff00"/><circle cx="1584.5" cy="160.5" r="3.2" fill="#ffff00"/><path d="M1584 259.5H1857" stroke="#ffffff" stroke-width="1.3"/><polyline points="37.0,248.2 66.0,248.2 70.0,249.7 300.0,249.5 417.0,245.5 533.0,245.5 538.0,244.5 567.0,244.5 572.0,245.5 642.0,245.5 656.0,246.7 760.0,246.7 771.0,249.2 828.0,249.2 832.0,250.7 907.0,250.7 911.0,251.7 953.0,251.7 956.0,250.7 1170.0,250.7 1177.0,250.5 1513.0,250.5 1516.0,252.0 1585.0,252.0" fill="none" stroke="#e8e8e8" stroke-width="1.4" stroke-dasharray="5 3.5"/><polyline points="37.0,270.5 66.0,270.5 70.0,268.7 253.0,268.7 257.0,269.5 335.0,269.5 338.0,271.0 395.0,271.0 398.0,272.0 437.0,271.8 440.0,273.2 538.0,273.2 542.0,274.2 563.0,274.2 568.0,273.2 642.0,273.2 646.0,271.8 702.0,271.8 708.0,270.5 766.0,270.5 771.0,269.0 828.0,269.0 832.0,268.0 905.0,268.0 910.0,267.0 1177.0,267.0 1180.0,268.0 1508.0,268.0 1512.0,266.6 1585.0,266.6" fill="none" stroke="#e8e8e8" stroke-width="1.4" stroke-dasharray="5 3.5"/><polyline points="37.0,261.7 60.0,263.5 85.0,265.5 106.0,265.5 130.0,264.0 153.0,262.8 160.0,259.5 172.0,254.0 187.0,251.5 239.0,251.8 250.0,250.0 262.0,249.0 277.0,251.3 292.0,249.5 308.0,247.0 370.0,247.0 378.0,245.0 387.0,243.4 400.0,243.8 412.0,246.0 417.0,246.0 479.0,247.2 520.0,248.0 532.0,249.0 545.0,252.0 552.0,255.0 575.0,256.5 594.0,257.6 604.0,262.0 625.0,262.0 636.0,259.5 650.0,255.5 663.0,260.7 667.0,262.0 704.0,262.0 709.0,257.6 717.0,256.0 750.0,255.0 781.0,253.8 792.0,253.4 817.0,255.0 838.0,257.0 853.0,259.7 859.0,262.4 901.0,262.4 913.0,262.8 932.0,264.3 963.0,266.0 1016.0,266.0 1026.0,262.8 1032.0,258.6 1043.0,255.0 1057.0,255.0 1066.0,259.7 1078.0,262.8 1109.0,263.8 1134.0,265.3 1234.0,265.0 1245.0,261.5 1255.0,254.7 1260.0,253.5 1314.0,253.5 1337.0,255.0 1360.0,253.5 1370.0,251.0 1378.0,249.0 1387.0,251.5 1395.0,253.5 1429.0,255.0 1440.0,259.2 1452.0,262.7 1475.0,262.7 1498.0,260.4 1509.0,257.4 1543.0,257.4 1555.0,255.5 1562.0,253.5 1575.0,254.0 1585.0,254.7" fill="none" stroke="#ff6a20" stroke-width="4.5" stroke-linejoin="round"/><polyline points="37.0,260.4 60.0,261.2 85.0,262.1 106.0,262.1 130.0,261.5 153.0,260.9 160.0,259.4 172.0,257.0 187.0,255.8 239.0,256.0 250.0,255.2 262.0,254.7 277.0,255.8 292.0,254.9 308.0,253.8 370.0,253.8 378.0,252.9 387.0,252.2 400.0,252.4 412.0,253.4 417.0,253.4 479.0,253.9 520.0,254.3 532.0,254.7 545.0,256.1 552.0,257.4 575.0,258.1 594.0,258.6 604.0,260.6 625.0,260.6 636.0,259.4 650.0,257.6 663.0,260.0 667.0,260.6 704.0,260.6 709.0,258.6 717.0,257.9 750.0,257.4 781.0,256.9 792.0,256.7 817.0,257.4 838.0,258.3 853.0,259.5 859.0,260.8 901.0,260.8 913.0,260.9 932.0,261.6 963.0,262.4 1016.0,262.4 1026.0,260.9 1032.0,259.0 1043.0,257.4 1057.0,257.4 1066.0,259.5 1078.0,260.9 1109.0,261.4 1134.0,262.1 1234.0,261.9 1245.0,260.3 1255.0,257.3 1260.0,256.7 1314.0,256.7 1337.0,257.4 1360.0,256.7 1370.0,255.6 1378.0,254.7 1387.0,255.8 1395.0,256.7 1429.0,257.4 1440.0,259.3 1452.0,260.9 1475.0,260.9 1498.0,259.8 1509.0,258.5 1543.0,258.5 1555.0,257.6 1562.0,256.7 1575.0,257.0 1585.0,257.3" fill="none" stroke="#e01010" stroke-width="1.6"/><polyline points="37.0,260.0 60.0,260.4 85.0,260.9 106.0,260.9 130.0,260.5 153.0,260.2 160.0,259.4 172.0,258.0 187.0,257.4 239.0,257.5 250.0,257.0 262.0,256.8 277.0,257.4 292.0,256.9 308.0,256.3 370.0,256.3 378.0,255.8 387.0,255.4 400.0,255.5 412.0,256.0 417.0,256.0 479.0,256.3 520.0,256.5 532.0,256.8 545.0,257.5 552.0,258.3 575.0,258.7 594.0,258.9 604.0,260.0 625.0,260.0 636.0,259.4 650.0,258.4 663.0,259.7 667.0,260.0 704.0,260.0 709.0,258.9 717.0,258.5 750.0,258.3 781.0,258.0 792.0,257.9 817.0,258.3 838.0,258.8 853.0,259.5 859.0,260.1 901.0,260.1 913.0,260.2 932.0,260.6 963.0,261.0 1016.0,261.0 1026.0,260.2 1032.0,259.2 1043.0,258.3 1057.0,258.3 1066.0,259.5 1078.0,260.2 1109.0,260.5 1134.0,260.9 1234.0,260.8 1245.0,259.9 1255.0,258.2 1260.0,257.9 1314.0,257.9 1337.0,258.3 1360.0,257.9 1370.0,257.3 1378.0,256.8 1387.0,257.4 1395.0,257.9 1429.0,258.3 1440.0,259.3 1452.0,260.2 1475.0,260.2 1498.0,259.6 1509.0,258.9 1543.0,258.9 1555.0,258.4 1562.0,257.9 1575.0,258.0 1585.0,258.2" fill="none" stroke="#e8c000" stroke-width="1.2"/><path d="M37 259.4H1584" stroke="#87ceeb" stroke-width="4"/><polyline points="37.0,259.4 154.2,259.4 169.8,243.5 185.3,259.4 496.1,259.4 511.7,243.5 527.2,259.4 636.0,259.4 651.5,243.5 667.1,259.4 698.1,259.4 713.7,243.5 729.2,259.4 729.2,259.4 744.8,243.5 760.3,259.4 1008.9,259.4 1024.5,243.5 1040.0,259.4 1350.8,259.4 1366.4,243.5 1381.9,259.4 1475.1,259.4 1490.7,243.5 1506.2,259.4 1584.0,259.4" fill="none" stroke="#87ceeb" stroke-width="4" stroke-linejoin="miter"/><polyline points="37.0,226.3 1133.3,226.3 1148.8,291.0 1242.0,291.0 1257.6,226.3 1585.0,226.3" fill="none" stroke="#fdfde2" stroke-width="5" stroke-linejoin="round"/><path d="M37 337.6H1857" stroke="#000" stroke-width="1.6" stroke-dasharray="5 4"/><path d="M37 384.6H1857" stroke="#000" stroke-width="1.6" stroke-dasharray="5 4"/><path d="M37 431.4H1857" stroke="#000" stroke-width="1.6" stroke-dasharray="5 4"/><path d="M37 478.4H1857" stroke="#000" stroke-width="1.6" stroke-dasharray="5 4"/><path d="M37 525.2H1857" stroke="#000" stroke-width="1.6" stroke-dasharray="5 4"/><polyline points="37.0,415.0 45.5,416.0 61.0,418.1 76.5,420.2 92.1,427.5 107.6,431.7 123.2,430.6 138.7,430.6 154.2,429.2 169.8,418.1 185.3,404.6 200.9,393.1 216.4,390.0 231.9,393.1 247.5,384.8 263.0,377.5 278.6,375.0 294.1,373.3 309.6,368.1 325.2,362.9 340.7,357.7 356.3,359.2 371.8,360.2 387.3,355.0 402.9,352.9 418.4,355.0 434.0,356.7 449.5,359.8 465.0,360.8 480.6,364.0 496.1,371.2 511.7,372.9 527.2,375.0 542.7,379.6 558.3,386.9 573.8,394.6 589.4,398.3 604.9,405.6 620.4,409.2 636.0,409.2 651.5,402.5 667.1,404.6 682.6,410.8 698.1,418.1 713.7,411.9 729.2,407.7 744.8,400.4 760.3,394.2 775.8,390.0 791.4,386.9 806.9,389.2 822.5,392.7 838.0,395.2 853.5,397.3 869.1,399.0 884.6,399.8 900.2,400.4 915.7,400.8 931.2,408.8 946.8,410.8 962.3,416.7 977.9,415.0 993.4,411.9 1008.9,414.0 1024.5,409.8 1040.0,400.4 1055.6,394.6 1071.1,394.6 1086.6,401.5 1102.2,407.7 1117.7,410.8 1133.3,414.0 1148.8,418.1 1164.3,420.2 1179.9,420.2 1195.4,421.7 1211.0,420.8 1226.5,419.8 1242.0,418.1 1257.6,399.4 1273.1,382.7 1288.7,374.4 1304.2,372.7 1319.7,377.9 1335.3,379.6 1350.8,383.3 1366.4,375.4 1381.9,367.5 1397.4,370.2 1413.0,375.4 1428.5,381.7 1444.1,389.0 1459.6,395.2 1475.1,395.2 1490.7,391.0 1506.2,387.5 1521.8,386.2 1537.3,386.2 1552.8,384.8 1568.4,383.8 1583.9,386.2" fill="none" stroke="#f0f0d8" stroke-width="1.15"/><polyline points="37.0,403.5 45.5,406.2 61.0,404.2 76.5,399.8 92.1,399.4 107.6,399.4 123.2,403.5 138.7,399.4 154.2,403.5 169.8,417.5 185.3,417.5 200.9,417.5 216.4,412.9 231.9,412.9 247.5,417.5 263.0,417.5 278.6,412.9 294.1,417.5 309.6,417.5 325.2,417.5 340.7,417.5 356.3,417.5 371.8,412.9 387.3,417.5 402.9,417.5 418.4,417.5 434.0,417.5 449.5,412.9 465.0,417.5 480.6,417.5 496.1,404.6 511.7,417.5 527.2,417.5 542.7,399.4 558.3,399.4 573.8,399.4 589.4,404.2 604.9,399.0 620.4,403.5 636.0,408.8 651.5,412.9 667.1,403.5 682.6,399.4 698.1,399.4 713.7,411.9 729.2,417.5 744.8,417.5 760.3,417.5 775.8,417.5 791.4,417.5 806.9,412.9 822.5,407.7 838.0,406.7 853.5,405.6 869.1,404.2 884.6,408.8 900.2,412.9 915.7,412.9 931.2,399.4 946.8,399.4 962.3,399.4 977.9,404.6 993.4,411.9 1008.9,404.6 1024.5,412.9 1040.0,417.5 1055.6,417.5 1071.1,412.9 1086.6,408.8 1102.2,407.7 1117.7,399.4 1133.3,404.2 1148.8,399.4 1164.3,399.4 1179.9,404.6 1195.4,399.4 1211.0,403.5 1226.5,404.6 1242.0,411.9 1257.6,417.5 1273.1,417.5 1288.7,417.5 1304.2,412.9 1319.7,412.9 1335.3,408.3 1350.8,412.9 1366.4,417.5 1381.9,417.5 1397.4,408.3 1413.0,407.7 1428.5,404.6 1444.1,403.5 1459.6,399.4 1475.1,412.9 1490.7,412.9 1506.2,412.9 1521.8,412.9 1537.3,412.9 1552.8,412.9 1568.4,412.9 1583.9,408.3" fill="none" stroke="#e6e600" stroke-width="1.15"/><polyline points="37.0,408.0 45.5,408.0 61.0,408.0 76.5,408.0 92.1,408.0 107.6,408.0 123.2,384.6 138.7,408.0 154.2,384.6 169.8,408.0 185.3,408.0 200.9,408.0 216.4,408.0 231.9,430.3 247.5,408.0 263.0,408.0 278.6,408.0 294.1,408.0 309.6,408.0 325.2,408.0 340.7,408.0 356.3,454.9 371.8,408.0 387.3,408.0 402.9,408.0 418.4,454.9 434.0,408.0 449.5,408.0 465.0,408.0 480.6,408.0 496.1,408.0 511.7,408.0 527.2,408.0 542.7,408.0 558.3,408.0 573.8,408.0 589.4,408.0 604.9,408.0 620.4,408.0 636.0,408.0 651.5,408.0 667.1,408.0 682.6,408.0 698.1,408.0 713.7,408.0 729.2,408.0 744.8,408.0 760.3,408.0 775.8,408.0 791.4,408.0 806.9,419.7 822.5,408.0 838.0,408.0 853.5,408.0 869.1,408.0 884.6,408.0 900.2,408.0 915.7,408.0 931.2,408.0 946.8,408.0 962.3,408.0 977.9,396.3 993.4,408.0 1008.9,408.0 1024.5,408.0 1040.0,408.0 1055.6,408.0 1071.1,408.0 1086.6,419.7 1102.2,408.0 1117.7,408.0 1133.3,408.0 1148.8,408.0 1164.3,408.0 1179.9,384.6 1195.4,408.0 1211.0,384.6 1226.5,408.0 1242.0,408.0 1257.6,408.0 1273.1,408.0 1288.7,408.0 1304.2,408.0 1319.7,454.9 1335.3,408.0 1350.8,408.0 1366.4,408.0 1381.9,408.0 1397.4,454.9 1413.0,408.0 1428.5,408.0 1444.1,408.0 1459.6,408.0 1475.1,408.0 1490.7,408.0 1506.2,408.0 1521.8,408.0 1537.3,419.7 1552.8,408.0 1568.4,408.0 1583.9,419.7" fill="none" stroke="#000" stroke-width="2.2" stroke-linejoin="miter"/><polyline points="37.0,396.3 45.5,396.3 61.0,396.3 76.5,396.3 92.1,396.3 107.6,396.3 123.2,372.8 138.7,372.8 154.2,349.4 169.8,349.4 185.3,349.4 200.9,349.4 216.4,349.4 231.9,431.4 247.5,431.4 263.0,431.4 278.6,431.4 294.1,431.4 309.6,431.4 325.2,431.4 340.7,431.4 356.3,478.4 371.8,478.4 387.3,478.4 402.9,478.4 418.4,525.2 434.0,525.2 449.5,525.2 465.0,525.2 480.6,525.2 496.1,525.2 511.7,525.2 527.2,525.2 542.7,525.2 558.3,525.2 573.8,525.2 589.4,525.2 604.9,525.2 620.4,525.2 636.0,525.2 651.5,525.2 667.1,525.2 682.6,525.2 698.1,525.2 713.7,525.2 729.2,525.2 744.8,525.2 760.3,525.2 775.8,525.2 791.4,525.2 806.9,537.0 822.5,537.0 838.0,537.0 853.5,537.0 869.1,537.0 884.6,537.0 900.2,537.0 915.7,537.0 931.2,537.0 946.8,537.0 962.3,537.0 977.9,396.3 993.4,396.3 1008.9,396.3 1024.5,396.3 1040.0,396.3 1055.6,396.3 1071.1,396.3 1086.6,419.7 1102.2,419.7 1117.7,419.7 1133.3,419.7 1148.8,419.7 1164.3,419.7 1179.9,384.6 1195.4,384.6 1211.0,361.1 1226.5,361.1 1242.0,361.1 1257.6,361.1 1273.1,361.1 1288.7,361.1 1304.2,361.1 1319.7,454.9 1335.3,454.9 1350.8,454.9 1366.4,454.9 1381.9,454.9 1397.4,501.8 1413.0,501.8 1428.5,501.8 1444.1,501.8 1459.6,501.8 1475.1,501.8 1490.7,501.8 1506.2,501.8 1521.8,501.8 1537.3,513.5 1552.8,513.5 1568.4,513.5 1583.9,525.2" fill="none" stroke="#8b0000" stroke-width="4" stroke-linejoin="miter"/><ellipse cx="1179.3" cy="387.5" rx="14.5" ry="18" fill="none" stroke="#32cd32" stroke-width="1.8"/><ellipse cx="1582.7" cy="520.7" rx="14.5" ry="19" fill="none" stroke="#ff0000" stroke-width="2"/><path d="M45.5 824.2V825.8" stroke="#8ea6c8" stroke-width="1.2"/><path d="M45.5 836.7V839.7" stroke="#8ea6c8" stroke-width="1.2"/><rect x="39.7" y="826.3" width="11.5" height="9.8" fill="none" stroke="#8ea6c8" stroke-width="1.2"/><path d="M61.0 839.7V844.2" stroke="#ff6a20" stroke-width="1.2"/><rect x="54.8" y="833.3" width="12.5" height="6.3" fill="#ff6a20"/><path d="M76.5 837.5V840.0" stroke="#ff6a20" stroke-width="1.2"/><path d="M76.5 842.0V846.7" stroke="#ff6a20" stroke-width="1.2"/><rect x="70.3" y="840.0" width="12.5" height="2.0" fill="#ff6a20"/><path d="M92.1 841.3V842.0" stroke="#ff6a20" stroke-width="1.2"/><rect x="85.8" y="842.0" width="12.5" height="15.0" fill="#ff6a20"/><path d="M107.6 850.0V851.3" stroke="#8ea6c8" stroke-width="1.2"/><rect x="101.9" y="851.8" width="11.5" height="6.0" fill="none" stroke="#8ea6c8" stroke-width="1.2"/><path d="M123.2 846.3V850.8" stroke="#ff6a20" stroke-width="1.2"/><rect x="116.9" y="850.8" width="12.5" height="1.5" fill="#ff6a20"/><path d="M138.7 846.3V853.0" stroke="#ff6a20" stroke-width="1.2"/><path d="M138.7 857.0V859.7" stroke="#ff6a20" stroke-width="1.2"/><rect x="132.4" y="853.0" width="12.5" height="4.0" fill="#ff6a20"/><rect x="148.0" y="855.0" width="12.5" height="2.0" fill="#8ea6c8"/><path d="M169.8 824.2V826.2" stroke="#8ea6c8" stroke-width="1.2"/><rect x="164.0" y="826.7" width="11.5" height="8.3" fill="none" stroke="#8ea6c8" stroke-width="1.2"/><rect x="179.6" y="821.8" width="11.5" height="4.7" fill="none" stroke="#8ea6c8" stroke-width="1.2"/><path d="M200.9 816.3V817.5" stroke="#8ea6c8" stroke-width="1.2"/><rect x="195.1" y="818.0" width="11.5" height="3.2" fill="none" stroke="#8ea6c8" stroke-width="1.2"/><path d="M216.4 815.0V817.5" stroke="#ff6a20" stroke-width="1.2"/><rect x="210.2" y="817.5" width="12.5" height="2.8" fill="#ff6a20"/><rect x="225.7" y="820.0" width="12.5" height="2.0" fill="#8ea6c8"/><path d="M247.5 791.3V796.3" stroke="#8ea6c8" stroke-width="1.2"/><path d="M247.5 820.3V824.7" stroke="#8ea6c8" stroke-width="1.2"/><rect x="241.7" y="796.8" width="11.5" height="23.0" fill="none" stroke="#8ea6c8" stroke-width="1.2"/><path d="M263.0 777.0V789.2" stroke="#8ea6c8" stroke-width="1.2"/><path d="M263.0 796.7V798.3" stroke="#8ea6c8" stroke-width="1.2"/><rect x="257.3" y="789.7" width="11.5" height="6.5" fill="none" stroke="#8ea6c8" stroke-width="1.2"/><path d="M278.6 777.2V786.3" stroke="#ff6a20" stroke-width="1.2"/><path d="M278.6 799.7V805.8" stroke="#ff6a20" stroke-width="1.2"/><rect x="272.3" y="786.3" width="12.5" height="13.3" fill="#ff6a20"/><path d="M294.1 800.5V807.2" stroke="#8ea6c8" stroke-width="1.2"/><rect x="288.3" y="785.8" width="11.5" height="14.2" fill="none" stroke="#8ea6c8" stroke-width="1.2"/><path d="M309.6 766.3V771.7" stroke="#8ea6c8" stroke-width="1.2"/><rect x="303.9" y="772.2" width="11.5" height="12.8" fill="none" stroke="#8ea6c8" stroke-width="1.2"/><path d="M325.2 766.3V768.8" stroke="#8ea6c8" stroke-width="1.2"/><rect x="319.4" y="769.3" width="11.5" height="2.2" fill="none" stroke="#8ea6c8" stroke-width="1.2"/><path d="M340.7 753.3V755.0" stroke="#8ea6c8" stroke-width="1.2"/><path d="M340.7 769.2V770.8" stroke="#8ea6c8" stroke-width="1.2"/><rect x="335.0" y="755.5" width="11.5" height="13.2" fill="none" stroke="#8ea6c8" stroke-width="1.2"/><path d="M356.3 755.8V758.7" stroke="#8ea6c8" stroke-width="1.2"/><rect x="350.0" y="753.8" width="12.5" height="2.0" fill="#8ea6c8"/><path d="M371.8 752.0V755.0" stroke="#ff6a20" stroke-width="1.2"/><path d="M371.8 756.5V758.7" stroke="#ff6a20" stroke-width="1.2"/><rect x="365.5" y="755.0" width="12.5" height="1.5" fill="#ff6a20"/><path d="M387.3 734.2V735.3" stroke="#8ea6c8" stroke-width="1.2"/><path d="M387.3 745.3V750.8" stroke="#8ea6c8" stroke-width="1.2"/><rect x="381.6" y="735.8" width="11.5" height="9.0" fill="none" stroke="#8ea6c8" stroke-width="1.2"/><path d="M402.9 723.3V734.2" stroke="#8ea6c8" stroke-width="1.2"/><path d="M402.9 735.7V737.5" stroke="#8ea6c8" stroke-width="1.2"/><rect x="396.6" y="734.2" width="12.5" height="1.5" fill="#8ea6c8"/><path d="M418.4 731.3V732.5" stroke="#8ea6c8" stroke-width="1.2"/><path d="M418.4 734.7V742.0" stroke="#8ea6c8" stroke-width="1.2"/><rect x="412.2" y="732.5" width="12.5" height="2.2" fill="#8ea6c8"/><path d="M434.0 725.0V726.7" stroke="#8ea6c8" stroke-width="1.2"/><path d="M434.0 733.0V737.5" stroke="#8ea6c8" stroke-width="1.2"/><rect x="428.2" y="727.2" width="11.5" height="5.3" fill="none" stroke="#8ea6c8" stroke-width="1.2"/><path d="M449.5 722.5V724.7" stroke="#8ea6c8" stroke-width="1.2"/><path d="M449.5 726.7V729.7" stroke="#8ea6c8" stroke-width="1.2"/><rect x="443.2" y="724.7" width="12.5" height="2.0" fill="#8ea6c8"/><path d="M465.0 716.3V717.8" stroke="#8ea6c8" stroke-width="1.2"/><rect x="459.3" y="718.3" width="11.5" height="5.3" fill="none" stroke="#8ea6c8" stroke-width="1.2"/><path d="M480.6 711.3V716.3" stroke="#8ea6c8" stroke-width="1.2"/><rect x="474.3" y="716.3" width="12.5" height="2.0" fill="#8ea6c8"/><path d="M496.1 719.7V721.7" stroke="#ff6a20" stroke-width="1.2"/><path d="M496.1 729.5V739.7" stroke="#ff6a20" stroke-width="1.2"/><rect x="490.4" y="722.2" width="11.5" height="6.8" fill="none" stroke="#ff6a20" stroke-width="1.2"/><path d="M511.7 707.5V710.3" stroke="#8ea6c8" stroke-width="1.2"/><path d="M511.7 722.0V728.3" stroke="#8ea6c8" stroke-width="1.2"/><rect x="505.9" y="710.8" width="11.5" height="10.7" fill="none" stroke="#8ea6c8" stroke-width="1.2"/><path d="M527.2 707.5V710.5" stroke="#ff6a20" stroke-width="1.2"/><path d="M527.2 712.0V719.2" stroke="#ff6a20" stroke-width="1.2"/><rect x="520.9" y="710.5" width="12.5" height="1.5" fill="#ff6a20"/><path d="M542.7 717.0V720.8" stroke="#ff6a20" stroke-width="1.2"/><rect x="536.5" y="711.3" width="12.5" height="5.7" fill="#ff6a20"/><path d="M558.3 729.7V735.8" stroke="#ff6a20" stroke-width="1.2"/><rect x="552.0" y="717.5" width="12.5" height="12.2" fill="#ff6a20"/><path d="M573.8 719.2V721.7" stroke="#8ea6c8" stroke-width="1.2"/><path d="M573.8 730.5V734.7" stroke="#8ea6c8" stroke-width="1.2"/><rect x="568.1" y="722.2" width="11.5" height="7.8" fill="none" stroke="#8ea6c8" stroke-width="1.2"/><path d="M589.4 717.5V721.3" stroke="#ff6a20" stroke-width="1.2"/><path d="M589.4 724.7V727.0" stroke="#ff6a20" stroke-width="1.2"/><rect x="583.1" y="721.3" width="12.5" height="3.3" fill="#ff6a20"/><path d="M604.9 731.3V735.3" stroke="#ff6a20" stroke-width="1.2"/><path d="M604.9 738.3V744.7" stroke="#ff6a20" stroke-width="1.2"/><rect x="598.6" y="735.3" width="12.5" height="3.0" fill="#ff6a20"/><path d="M620.4 721.3V726.7" stroke="#8ea6c8" stroke-width="1.2"/><path d="M620.4 739.5V749.7" stroke="#8ea6c8" stroke-width="1.2"/><rect x="614.7" y="727.2" width="11.5" height="11.8" fill="none" stroke="#8ea6c8" stroke-width="1.2"/><path d="M636.0 723.8V725.0" stroke="#8ea6c8" stroke-width="1.2"/><path d="M636.0 727.0V731.3" stroke="#8ea6c8" stroke-width="1.2"/><rect x="629.7" y="725.0" width="12.5" height="2.0" fill="#8ea6c8"/><path d="M651.5 710.0V712.8" stroke="#8ea6c8" stroke-width="1.2"/><rect x="645.8" y="713.3" width="11.5" height="11.5" fill="none" stroke="#8ea6c8" stroke-width="1.2"/><path d="M667.1 733.3V737.5" stroke="#ff6a20" stroke-width="1.2"/><rect x="660.8" y="712.2" width="12.5" height="21.2" fill="#ff6a20"/><path d="M682.6 725.0V732.5" stroke="#8ea6c8" stroke-width="1.2"/><rect x="676.4" y="732.5" width="12.5" height="2.2" fill="#8ea6c8"/><path d="M698.1 730.0V733.7" stroke="#ff6a20" stroke-width="1.2"/><path d="M698.1 742.0V743.3" stroke="#ff6a20" stroke-width="1.2"/><rect x="691.9" y="733.7" width="12.5" height="8.3" fill="#ff6a20"/><rect x="707.9" y="721.0" width="11.5" height="11.8" fill="none" stroke="#8ea6c8" stroke-width="1.2"/><path d="M729.2 713.0V718.7" stroke="#8ea6c8" stroke-width="1.2"/><path d="M729.2 720.5V728.7" stroke="#8ea6c8" stroke-width="1.2"/><rect x="723.0" y="718.7" width="12.5" height="1.8" fill="#8ea6c8"/><rect x="739.0" y="708.0" width="11.5" height="12.0" fill="none" stroke="#8ea6c8" stroke-width="1.2"/><path d="M760.3 700.0V701.7" stroke="#8ea6c8" stroke-width="1.2"/><path d="M760.3 708.0V712.2" stroke="#8ea6c8" stroke-width="1.2"/><rect x="754.5" y="702.2" width="11.5" height="5.3" fill="none" stroke="#8ea6c8" stroke-width="1.2"/><path d="M775.8 698.3V700.3" stroke="#8ea6c8" stroke-width="1.2"/><rect x="769.6" y="700.3" width="12.5" height="2.2" fill="#8ea6c8"/><path d="M791.4 695.8V697.5" stroke="#8ea6c8" stroke-width="1.2"/><rect x="785.6" y="698.0" width="11.5" height="2.3" fill="none" stroke="#8ea6c8" stroke-width="1.2"/><path d="M806.9 692.2V698.0" stroke="#ff6a20" stroke-width="1.2"/><rect x="800.7" y="698.0" width="12.5" height="2.8" fill="#ff6a20"/><path d="M822.5 697.5V700.3" stroke="#8ea6c8" stroke-width="1.2"/><path d="M822.5 702.0V707.0" stroke="#8ea6c8" stroke-width="1.2"/><rect x="816.2" y="700.3" width="12.5" height="1.7" fill="#8ea6c8"/><path d="M838.0 696.2V700.8" stroke="#ff6a20" stroke-width="1.2"/><path d="M838.0 703.3V713.7" stroke="#ff6a20" stroke-width="1.2"/><rect x="831.8" y="700.8" width="12.5" height="2.5" fill="#ff6a20"/><path d="M853.5 700.8V702.0" stroke="#8ea6c8" stroke-width="1.2"/><path d="M853.5 704.2V710.8" stroke="#8ea6c8" stroke-width="1.2"/><rect x="847.3" y="702.0" width="12.5" height="2.2" fill="#8ea6c8"/><path d="M869.1 699.7V702.8" stroke="#ff6a20" stroke-width="1.2"/><path d="M869.1 708.3V709.7" stroke="#ff6a20" stroke-width="1.2"/><rect x="862.8" y="702.8" width="12.5" height="5.5" fill="#ff6a20"/><path d="M884.6 700.0V702.8" stroke="#8ea6c8" stroke-width="1.2"/><rect x="878.9" y="703.3" width="11.5" height="5.7" fill="none" stroke="#8ea6c8" stroke-width="1.2"/><path d="M900.2 700.0V701.3" stroke="#8ea6c8" stroke-width="1.2"/><path d="M900.2 703.3V705.0" stroke="#8ea6c8" stroke-width="1.2"/><rect x="893.9" y="701.3" width="12.5" height="2.0" fill="#8ea6c8"/><path d="M915.7 697.0V701.3" stroke="#ff6a20" stroke-width="1.2"/><path d="M915.7 702.8V705.8" stroke="#ff6a20" stroke-width="1.2"/><rect x="909.5" y="701.3" width="12.5" height="1.5" fill="#ff6a20"/><path d="M931.2 726.7V732.0" stroke="#ff6a20" stroke-width="1.2"/><rect x="925.5" y="716.8" width="11.5" height="9.3" fill="none" stroke="#ff6a20" stroke-width="1.2"/><path d="M946.8 703.3V710.8" stroke="#8ea6c8" stroke-width="1.2"/><rect x="941.0" y="711.3" width="11.5" height="4.8" fill="none" stroke="#8ea6c8" stroke-width="1.2"/><path d="M962.3 725.8V729.7" stroke="#ff6a20" stroke-width="1.2"/><rect x="956.1" y="710.0" width="12.5" height="15.8" fill="#ff6a20"/><rect x="972.1" y="714.3" width="11.5" height="12.2" fill="none" stroke="#8ea6c8" stroke-width="1.2"/><path d="M993.4 709.2V712.5" stroke="#8ea6c8" stroke-width="1.2"/><rect x="987.1" y="712.5" width="12.5" height="2.2" fill="#8ea6c8"/><path d="M1008.9 717.0V720.8" stroke="#ff6a20" stroke-width="1.2"/><rect x="1002.7" y="713.7" width="12.5" height="3.3" fill="#ff6a20"/><rect x="1018.7" y="708.0" width="11.5" height="9.8" fill="none" stroke="#8ea6c8" stroke-width="1.2"/><path d="M1040.0 680.8V683.0" stroke="#8ea6c8" stroke-width="1.2"/><rect x="1034.3" y="683.5" width="11.5" height="16.8" fill="none" stroke="#8ea6c8" stroke-width="1.2"/><rect x="1049.3" y="682.5" width="12.5" height="5.0" fill="#ff6a20"/><path d="M1071.1 683.7V687.5" stroke="#ff6a20" stroke-width="1.2"/><path d="M1071.1 698.3V705.8" stroke="#ff6a20" stroke-width="1.2"/><rect x="1064.8" y="687.5" width="12.5" height="10.8" fill="#ff6a20"/><path d="M1086.6 697.0V698.7" stroke="#ff6a20" stroke-width="1.2"/><path d="M1086.6 708.3V714.7" stroke="#ff6a20" stroke-width="1.2"/><rect x="1080.4" y="698.7" width="12.5" height="9.7" fill="#ff6a20"/><path d="M1102.2 702.5V705.3" stroke="#8ea6c8" stroke-width="1.2"/><rect x="1096.4" y="705.8" width="11.5" height="3.3" fill="none" stroke="#8ea6c8" stroke-width="1.2"/><path d="M1117.7 713.3V717.0" stroke="#ff6a20" stroke-width="1.2"/><rect x="1111.5" y="705.0" width="12.5" height="8.3" fill="#ff6a20"/><path d="M1133.3 709.2V711.3" stroke="#8ea6c8" stroke-width="1.2"/><rect x="1127.5" y="711.8" width="11.5" height="2.2" fill="none" stroke="#8ea6c8" stroke-width="1.2"/><path d="M1148.8 712.0V715.0" stroke="#ff6a20" stroke-width="1.2"/><rect x="1142.5" y="715.0" width="12.5" height="8.7" fill="#ff6a20"/><path d="M1164.3 717.5V722.5" stroke="#8ea6c8" stroke-width="1.2"/><path d="M1164.3 724.7V726.7" stroke="#8ea6c8" stroke-width="1.2"/><rect x="1158.1" y="722.5" width="12.5" height="2.2" fill="#8ea6c8"/><path d="M1179.9 716.7V720.8" stroke="#8ea6c8" stroke-width="1.2"/><path d="M1179.9 723.0V726.7" stroke="#8ea6c8" stroke-width="1.2"/><rect x="1173.6" y="720.8" width="12.5" height="2.2" fill="#8ea6c8"/><path d="M1195.4 724.7V727.0" stroke="#ff6a20" stroke-width="1.2"/><rect x="1189.2" y="722.0" width="12.5" height="2.7" fill="#ff6a20"/><path d="M1211.0 725.3V728.7" stroke="#8ea6c8" stroke-width="1.2"/><rect x="1205.2" y="723.5" width="11.5" height="1.3" fill="none" stroke="#8ea6c8" stroke-width="1.2"/><path d="M1226.5 724.0V727.0" stroke="#ff6a20" stroke-width="1.2"/><rect x="1220.2" y="722.5" width="12.5" height="1.5" fill="#ff6a20"/><rect x="1235.8" y="722.5" width="12.5" height="2.2" fill="#8ea6c8"/><path d="M1257.6 672.5V676.3" stroke="#8ea6c8" stroke-width="1.2"/><rect x="1251.8" y="676.8" width="11.5" height="7.2" fill="none" stroke="#8ea6c8" stroke-width="1.2"/><path d="M1273.1 676.7V685.8" stroke="#8ea6c8" stroke-width="1.2"/><rect x="1267.4" y="673.5" width="11.5" height="2.7" fill="none" stroke="#8ea6c8" stroke-width="1.2"/><path d="M1288.7 665.0V667.8" stroke="#8ea6c8" stroke-width="1.2"/><rect x="1282.9" y="668.3" width="11.5" height="4.2" fill="none" stroke="#8ea6c8" stroke-width="1.2"/><path d="M1304.2 665.8V667.5" stroke="#ff6a20" stroke-width="1.2"/><path d="M1304.2 670.8V675.8" stroke="#ff6a20" stroke-width="1.2"/><rect x="1298.0" y="667.5" width="12.5" height="3.3" fill="#ff6a20"/><path d="M1319.7 666.7V669.2" stroke="#8ea6c8" stroke-width="1.2"/><rect x="1314.0" y="669.7" width="11.5" height="2.0" fill="none" stroke="#8ea6c8" stroke-width="1.2"/><path d="M1335.3 667.0V668.7" stroke="#ff6a20" stroke-width="1.2"/><rect x="1329.0" y="668.7" width="12.5" height="6.0" fill="#ff6a20"/><rect x="1345.1" y="666.0" width="11.5" height="9.0" fill="none" stroke="#8ea6c8" stroke-width="1.2"/><rect x="1360.6" y="644.7" width="11.5" height="9.0" fill="none" stroke="#8ea6c8" stroke-width="1.2"/><path d="M1381.9 634.2V642.5" stroke="#8ea6c8" stroke-width="1.2"/><rect x="1375.6" y="642.5" width="12.5" height="2.2" fill="#8ea6c8"/><path d="M1397.4 640.8V642.5" stroke="#ff6a20" stroke-width="1.2"/><path d="M1397.4 654.5V657.5" stroke="#ff6a20" stroke-width="1.2"/><rect x="1391.2" y="642.5" width="12.5" height="12.0" fill="#ff6a20"/><path d="M1413.0 648.3V650.5" stroke="#8ea6c8" stroke-width="1.2"/><rect x="1407.2" y="651.0" width="11.5" height="4.0" fill="none" stroke="#8ea6c8" stroke-width="1.2"/><path d="M1428.5 646.3V650.3" stroke="#ff6a20" stroke-width="1.2"/><path d="M1428.5 652.0V653.7" stroke="#ff6a20" stroke-width="1.2"/><rect x="1422.3" y="650.3" width="12.5" height="1.7" fill="#ff6a20"/><path d="M1444.1 665.0V668.3" stroke="#ff6a20" stroke-width="1.2"/><rect x="1437.8" y="652.5" width="12.5" height="12.5" fill="#ff6a20"/><path d="M1459.6 664.2V665.3" stroke="#ff6a20" stroke-width="1.2"/><path d="M1459.6 667.0V670.0" stroke="#ff6a20" stroke-width="1.2"/><rect x="1453.3" y="665.3" width="12.5" height="1.7" fill="#ff6a20"/><path d="M1475.1 646.7V648.8" stroke="#8ea6c8" stroke-width="1.2"/><rect x="1469.4" y="649.3" width="11.5" height="5.7" fill="none" stroke="#8ea6c8" stroke-width="1.2"/><path d="M1490.7 645.8V648.5" stroke="#ff6a20" stroke-width="1.2"/><path d="M1490.7 650.0V658.7" stroke="#ff6a20" stroke-width="1.2"/><rect x="1484.4" y="648.5" width="12.5" height="1.5" fill="#ff6a20"/><path d="M1506.2 641.2V644.2" stroke="#8ea6c8" stroke-width="1.2"/><rect x="1500.5" y="644.7" width="11.5" height="5.7" fill="none" stroke="#8ea6c8" stroke-width="1.2"/><path d="M1521.8 637.1V638.8" stroke="#8ea6c8" stroke-width="1.2"/><rect x="1516.0" y="639.2" width="11.5" height="4.8" fill="none" stroke="#8ea6c8" stroke-width="1.2"/><path d="M1537.3 632.1V633.8" stroke="#8ea6c8" stroke-width="1.2"/><rect x="1531.5" y="634.2" width="11.5" height="4.8" fill="none" stroke="#8ea6c8" stroke-width="1.2"/><rect x="1547.1" y="629.2" width="11.5" height="4.8" fill="none" stroke="#8ea6c8" stroke-width="1.2"/><rect x="1562.6" y="619.2" width="11.5" height="9.8" fill="none" stroke="#8ea6c8" stroke-width="1.2"/><path d="M1583.9 631.0V636.7" stroke="#ff6a20" stroke-width="1.2"/><rect x="1577.7" y="625.8" width="12.5" height="5.2" fill="#ff6a20"/><polyline points="37.0,835.8 45.5,828.0 61.0,847.5 76.5,849.2 92.1,868.0 107.6,855.8 123.2,856.7 138.7,861.7 154.2,860.0 169.8,818.8 185.3,820.0 200.9,819.2 216.4,825.3 231.9,823.0 247.5,795.3 263.0,789.7 278.6,810.3 294.1,796.7 309.6,774.5 325.2,772.8 340.7,757.5 356.3,758.7 371.8,760.3 387.3,735.3 402.9,735.3 418.4,738.0 434.0,730.8 449.5,727.5 465.0,720.8 480.6,719.2 496.1,729.2 511.7,712.5 527.2,718.3 542.7,725.8 558.3,741.7 573.8,725.5 589.4,730.0 604.9,750.3 620.4,733.0 636.0,730.0 651.5,715.3 667.1,746.7 682.6,741.7 698.1,753.0 713.7,719.5 729.2,720.5 744.8,709.2 760.3,704.7 775.8,702.8 791.4,701.7 806.9,705.8 822.5,704.2 838.0,709.5 853.5,706.7 869.1,715.3 884.6,707.0 900.2,705.3 915.7,706.7 931.2,726.7 946.8,714.7 962.3,736.7 977.9,719.2 993.4,718.3 1008.9,723.3 1024.5,710.8 1040.0,679.2 1055.6,688.3 1071.1,709.2 1086.6,720.3 1102.2,710.8 1117.7,723.0 1133.3,715.8 1148.8,732.0 1164.3,727.0 1179.9,726.7 1195.4,730.5 1211.0,726.7 1226.5,728.3 1242.0,725.0 1257.6,664.5 1273.1,671.3 1288.7,668.3 1304.2,676.3 1319.7,672.5 1335.3,679.5 1350.8,664.5 1366.4,638.8 1381.9,640.8 1397.4,664.2 1413.0,655.8 1428.5,657.5 1444.1,673.0 1459.6,673.0 1475.1,646.7 1490.7,653.0 1506.2,645.8 1521.8,640.3 1537.3,636.2 1552.8,629.5 1568.4,619.2 1583.9,637.3" fill="none" stroke="#22b422" stroke-width="1.15" stroke-linejoin="round"/><polyline points="37.0,825.8 45.5,818.8 61.0,833.3 76.5,840.8 92.1,857.0 107.6,846.7 123.2,848.7 138.7,853.0 154.2,852.5 169.8,811.7 185.3,813.0 200.9,811.3 216.4,817.5 231.9,818.0 247.5,784.7 263.0,777.0 278.6,794.2 294.1,775.3 309.6,756.7 325.2,759.2 340.7,745.3 356.3,748.3 371.8,753.3 387.3,725.8 402.9,726.7 418.4,727.5 434.0,720.8 449.5,718.7 465.0,712.8 480.6,712.5 496.1,720.0 511.7,701.7 527.2,704.2 542.7,711.7 558.3,730.0 573.8,715.3 589.4,719.2 604.9,736.3 620.4,720.8 636.0,718.7 651.5,702.5 667.1,731.3 682.6,730.3 698.1,740.0 713.7,707.5 729.2,712.5 744.8,698.7 760.3,693.8 775.8,693.7 791.4,695.3 806.9,698.7 822.5,699.2 838.0,701.7 853.5,697.5 869.1,705.0 884.6,697.5 900.2,698.7 915.7,698.7 931.2,719.5 946.8,705.8 962.3,725.8 977.9,707.5 993.4,707.5 1008.9,713.3 1024.5,702.8 1040.0,670.0 1055.6,680.8 1071.1,696.7 1086.6,707.0 1102.2,700.0 1117.7,710.0 1133.3,706.7 1148.8,724.2 1164.3,719.2 1179.9,717.0 1195.4,721.7 1211.0,718.7 1226.5,721.2 1242.0,719.2 1257.6,657.8 1273.1,663.8 1288.7,660.5 1304.2,667.5 1319.7,665.8 1335.3,671.7 1350.8,660.0 1366.4,633.0 1381.9,634.2 1397.4,653.3 1413.0,646.7 1428.5,648.7 1444.1,663.3 1459.6,665.8 1475.1,638.8 1490.7,644.2 1506.2,638.3 1521.8,633.3 1537.3,629.7 1552.8,623.0 1568.4,613.8 1583.9,630.7" fill="none" stroke="#ee0000" stroke-width="1.15" stroke-linejoin="round"/><path d="M1177.8 737.5L1187 747.8H1181.2V759.8H1174.5V747.8H1168.6Z" fill="#009a00"/><rect x="1582.2" y="607" width="2.6" height="15" fill="#ffff00"/><rect x="1574.2" y="599.2" width="18.6" height="8.6" fill="#202000" stroke="#ffff00" stroke-width="1.6"/><text x="1583.5" y="606.6" font-size="7.5" font-weight="bold" fill="#e8e000" text-anchor="middle" font-family="Liberation Sans" textLength="15">EXIT</text><path d="M42.1 900.9L49.9 893.3" stroke="#0a8c0a" stroke-width="1.15"/><path d="M52.1 900.9L59.9 893.3" stroke="#0a8c0a" stroke-width="1.15"/><path d="M62.1 900.9L69.9 893.3" stroke="#0a8c0a" stroke-width="1.15"/><path d="M72.1 900.9L79.9 893.3" stroke="#0a8c0a" stroke-width="1.15"/><path d="M82.1 900.9L89.9 893.3" stroke="#0a8c0a" stroke-width="1.15"/><path d="M92.1 900.9L99.9 893.3" stroke="#0a8c0a" stroke-width="1.15"/><path d="M102.1 900.9L109.9 893.3" stroke="#0a8c0a" stroke-width="1.15"/><path d="M112.1 900.9L119.9 893.3" stroke="#0a8c0a" stroke-width="1.15"/><path d="M122.1 900.9L129.9 893.3" stroke="#0a8c0a" stroke-width="1.15"/><path d="M132.1 900.9L139.9 893.3" stroke="#0a8c0a" stroke-width="1.15"/><path d="M142.1 900.9L149.9 893.3" stroke="#0a8c0a" stroke-width="1.15"/><path d="M152.1 900.9L159.9 893.3" stroke="#0a8c0a" stroke-width="1.15"/><path d="M162.1 900.9L169.9 893.3" stroke="#0a8c0a" stroke-width="1.15"/><path d="M172.1 900.9L179.9 893.3" stroke="#0a8c0a" stroke-width="1.15"/><path d="M182.1 900.9L189.9 893.3" stroke="#0a8c0a" stroke-width="1.15"/><path d="M192.1 900.9L199.9 893.3" stroke="#0a8c0a" stroke-width="1.15"/><path d="M202.1 900.9L209.9 893.3" stroke="#0a8c0a" stroke-width="1.15"/><path d="M212.1 900.9L219.9 893.3" stroke="#0a8c0a" stroke-width="1.15"/><path d="M222.1 900.9L229.9 893.3" stroke="#0a8c0a" stroke-width="1.15"/><path d="M232.1 900.9L239.9 893.3" stroke="#0a8c0a" stroke-width="1.15"/><path d="M242.1 900.9L249.9 893.3" stroke="#0a8c0a" stroke-width="1.15"/><path d="M252.1 900.9L259.9 893.3" stroke="#0a8c0a" stroke-width="1.15"/><path d="M262.1 900.9L269.9 893.3" stroke="#0a8c0a" stroke-width="1.15"/><path d="M272.1 900.9L279.9 893.3" stroke="#0a8c0a" stroke-width="1.15"/><path d="M282.1 900.9L289.9 893.3" stroke="#0a8c0a" stroke-width="1.15"/><path d="M292.1 900.9L299.9 893.3" stroke="#0a8c0a" stroke-width="1.15"/><path d="M302.1 900.9L309.9 893.3" stroke="#0a8c0a" stroke-width="1.15"/><path d="M312.1 900.9L319.9 893.3" stroke="#0a8c0a" stroke-width="1.15"/><path d="M322.1 900.9L329.9 893.3" stroke="#0a8c0a" stroke-width="1.15"/><path d="M332.1 900.9L339.9 893.3" stroke="#0a8c0a" stroke-width="1.15"/><path d="M342.1 900.9L349.9 893.3" stroke="#0a8c0a" stroke-width="1.15"/><path d="M352.1 900.9L359.9 893.3" stroke="#0a8c0a" stroke-width="1.15"/><path d="M362.1 900.9L369.9 893.3" stroke="#0a8c0a" stroke-width="1.15"/><path d="M372.1 900.9L379.9 893.3" stroke="#0a8c0a" stroke-width="1.15"/><path d="M382.1 900.9L389.9 893.3" stroke="#0a8c0a" stroke-width="1.15"/><path d="M392.1 900.9L399.9 893.3" stroke="#0a8c0a" stroke-width="1.15"/><path d="M402.1 900.9L409.9 893.3" stroke="#0a8c0a" stroke-width="1.15"/><path d="M412.1 900.9L419.9 893.3" stroke="#0a8c0a" stroke-width="1.15"/><path d="M422.1 900.9L429.9 893.3" stroke="#0a8c0a" stroke-width="1.15"/><path d="M432.1 900.9L439.9 893.3" stroke="#0a8c0a" stroke-width="1.15"/><path d="M442.1 900.9L449.9 893.3" stroke="#0a8c0a" stroke-width="1.15"/><path d="M452.1 900.9L459.9 893.3" stroke="#0a8c0a" stroke-width="1.15"/><path d="M462.1 900.9L469.9 893.3" stroke="#0a8c0a" stroke-width="1.15"/><path d="M472.1 900.9L479.9 893.3" stroke="#0a8c0a" stroke-width="1.15"/><path d="M482.1 900.9L489.9 893.3" stroke="#0a8c0a" stroke-width="1.15"/><path d="M492.1 900.9L499.9 893.3" stroke="#0a8c0a" stroke-width="1.15"/><path d="M502.1 900.9L509.9 893.3" stroke="#0a8c0a" stroke-width="1.15"/><path d="M512.1 900.9L519.9 893.3" stroke="#0a8c0a" stroke-width="1.15"/><path d="M522.1 900.9L529.9 893.3" stroke="#0a8c0a" stroke-width="1.15"/><path d="M532.1 900.9L539.9 893.3" stroke="#0a8c0a" stroke-width="1.15"/><path d="M542.1 900.9L549.9 893.3" stroke="#0a8c0a" stroke-width="1.15"/><path d="M552.1 900.9L559.9 893.3" stroke="#0a8c0a" stroke-width="1.15"/><path d="M562.1 900.9L569.9 893.3" stroke="#0a8c0a" stroke-width="1.15"/><path d="M572.1 900.9L579.9 893.3" stroke="#0a8c0a" stroke-width="1.15"/><path d="M582.1 900.9L589.9 893.3" stroke="#0a8c0a" stroke-width="1.15"/><path d="M592.1 900.9L599.9 893.3" stroke="#0a8c0a" stroke-width="1.15"/><path d="M602.1 900.9L609.9 893.3" stroke="#0a8c0a" stroke-width="1.15"/><path d="M612.1 900.9L619.9 893.3" stroke="#0a8c0a" stroke-width="1.15"/><path d="M622.1 900.9L629.9 893.3" stroke="#0a8c0a" stroke-width="1.15"/><path d="M632.1 900.9L639.9 893.3" stroke="#0a8c0a" stroke-width="1.15"/><path d="M642.1 900.9L649.9 893.3" stroke="#0a8c0a" stroke-width="1.15"/><path d="M652.1 900.9L659.9 893.3" stroke="#0a8c0a" stroke-width="1.15"/><path d="M662.1 900.9L669.9 893.3" stroke="#0a8c0a" stroke-width="1.15"/><path d="M672.1 900.9L679.9 893.3" stroke="#0a8c0a" stroke-width="1.15"/><path d="M682.1 900.9L689.9 893.3" stroke="#0a8c0a" stroke-width="1.15"/><path d="M692.1 900.9L699.9 893.3" stroke="#0a8c0a" stroke-width="1.15"/><path d="M702.1 900.9L709.9 893.3" stroke="#0a8c0a" stroke-width="1.15"/><path d="M712.1 900.9L719.9 893.3" stroke="#0a8c0a" stroke-width="1.15"/><path d="M722.1 900.9L729.9 893.3" stroke="#0a8c0a" stroke-width="1.15"/><path d="M732.1 900.9L739.9 893.3" stroke="#0a8c0a" stroke-width="1.15"/><path d="M742.1 900.9L749.9 893.3" stroke="#0a8c0a" stroke-width="1.15"/><path d="M752.1 900.9L759.9 893.3" stroke="#0a8c0a" stroke-width="1.15"/><path d="M762.1 900.9L769.9 893.3" stroke="#0a8c0a" stroke-width="1.15"/><path d="M772.1 900.9L779.9 893.3" stroke="#0a8c0a" stroke-width="1.15"/><path d="M782.1 900.9L789.9 893.3" stroke="#0a8c0a" stroke-width="1.15"/><path d="M792.1 900.9L799.9 893.3" stroke="#0a8c0a" stroke-width="1.15"/><path d="M802.1 900.9L809.9 893.3" stroke="#0a8c0a" stroke-width="1.15"/><path d="M812.1 900.9L819.9 893.3" stroke="#0a8c0a" stroke-width="1.15"/><path d="M822.1 900.9L829.9 893.3" stroke="#0a8c0a" stroke-width="1.15"/><path d="M832.1 900.9L839.9 893.3" stroke="#0a8c0a" stroke-width="1.15"/><path d="M842.1 900.9L849.9 893.3" stroke="#0a8c0a" stroke-width="1.15"/><path d="M852.1 900.9L859.9 893.3" stroke="#0a8c0a" stroke-width="1.15"/><path d="M862.1 900.9L869.9 893.3" stroke="#0a8c0a" stroke-width="1.15"/><path d="M872.1 900.9L879.9 893.3" stroke="#0a8c0a" stroke-width="1.15"/><path d="M882.1 900.9L889.9 893.3" stroke="#0a8c0a" stroke-width="1.15"/><path d="M892.1 900.9L899.9 893.3" stroke="#0a8c0a" stroke-width="1.15"/><path d="M902.1 900.9L909.9 893.3" stroke="#0a8c0a" stroke-width="1.15"/><path d="M912.1 900.9L919.9 893.3" stroke="#0a8c0a" stroke-width="1.15"/><path d="M922.1 900.9L929.9 893.3" stroke="#0a8c0a" stroke-width="1.15"/><path d="M932.1 900.9L939.9 893.3" stroke="#0a8c0a" stroke-width="1.15"/><path d="M942.1 900.9L949.9 893.3" stroke="#0a8c0a" stroke-width="1.15"/><path d="M952.1 900.9L959.9 893.3" stroke="#0a8c0a" stroke-width="1.15"/><path d="M962.1 900.9L969.9 893.3" stroke="#0a8c0a" stroke-width="1.15"/><path d="M972.1 900.9L979.9 893.3" stroke="#0a8c0a" stroke-width="1.15"/><path d="M982.1 900.9L989.9 893.3" stroke="#0a8c0a" stroke-width="1.15"/><path d="M992.1 900.9L999.9 893.3" stroke="#0a8c0a" stroke-width="1.15"/><path d="M1002.1 900.9L1009.9 893.3" stroke="#0a8c0a" stroke-width="1.15"/><path d="M1012.1 900.9L1019.9 893.3" stroke="#0a8c0a" stroke-width="1.15"/><path d="M1022.1 900.9L1029.9 893.3" stroke="#0a8c0a" stroke-width="1.15"/><path d="M1032.1 900.9L1039.9 893.3" stroke="#0a8c0a" stroke-width="1.15"/><path d="M1042.1 900.9L1049.9 893.3" stroke="#0a8c0a" stroke-width="1.15"/><path d="M1052.1 900.9L1059.9 893.3" stroke="#0a8c0a" stroke-width="1.15"/><path d="M1062.1 900.9L1069.9 893.3" stroke="#0a8c0a" stroke-width="1.15"/><path d="M1072.1 900.9L1079.9 893.3" stroke="#0a8c0a" stroke-width="1.15"/><path d="M1082.1 900.9L1089.9 893.3" stroke="#0a8c0a" stroke-width="1.15"/><path d="M1092.1 900.9L1099.9 893.3" stroke="#0a8c0a" stroke-width="1.15"/><path d="M1102.1 900.9L1109.9 893.3" stroke="#0a8c0a" stroke-width="1.15"/><path d="M1112.1 900.9L1119.9 893.3" stroke="#0a8c0a" stroke-width="1.15"/><path d="M1122.1 900.9L1129.9 893.3" stroke="#0a8c0a" stroke-width="1.15"/><path d="M1132.1 900.9L1139.9 893.3" stroke="#0a8c0a" stroke-width="1.15"/><path d="M1252.1 900.9L1259.9 893.3" stroke="#0a8c0a" stroke-width="1.15"/><path d="M1262.1 900.9L1269.9 893.3" stroke="#0a8c0a" stroke-width="1.15"/><path d="M1272.1 900.9L1279.9 893.3" stroke="#0a8c0a" stroke-width="1.15"/><path d="M1282.1 900.9L1289.9 893.3" stroke="#0a8c0a" stroke-width="1.15"/><path d="M1292.1 900.9L1299.9 893.3" stroke="#0a8c0a" stroke-width="1.15"/><path d="M1302.1 900.9L1309.9 893.3" stroke="#0a8c0a" stroke-width="1.15"/><path d="M1312.1 900.9L1319.9 893.3" stroke="#0a8c0a" stroke-width="1.15"/><path d="M1322.1 900.9L1329.9 893.3" stroke="#0a8c0a" stroke-width="1.15"/><path d="M1332.1 900.9L1339.9 893.3" stroke="#0a8c0a" stroke-width="1.15"/><path d="M1342.1 900.9L1349.9 893.3" stroke="#0a8c0a" stroke-width="1.15"/><path d="M1352.1 900.9L1359.9 893.3" stroke="#0a8c0a" stroke-width="1.15"/><path d="M1362.1 900.9L1369.9 893.3" stroke="#0a8c0a" stroke-width="1.15"/><path d="M1372.1 900.9L1379.9 893.3" stroke="#0a8c0a" stroke-width="1.15"/><path d="M1382.1 900.9L1389.9 893.3" stroke="#0a8c0a" stroke-width="1.15"/><path d="M1392.1 900.9L1399.9 893.3" stroke="#0a8c0a" stroke-width="1.15"/><path d="M1402.1 900.9L1409.9 893.3" stroke="#0a8c0a" stroke-width="1.15"/><path d="M1412.1 900.9L1419.9 893.3" stroke="#0a8c0a" stroke-width="1.15"/><path d="M1422.1 900.9L1429.9 893.3" stroke="#0a8c0a" stroke-width="1.15"/><path d="M1432.1 900.9L1439.9 893.3" stroke="#0a8c0a" stroke-width="1.15"/><path d="M1442.1 900.9L1449.9 893.3" stroke="#0a8c0a" stroke-width="1.15"/><path d="M1452.1 900.9L1459.9 893.3" stroke="#0a8c0a" stroke-width="1.15"/><path d="M1462.1 900.9L1469.9 893.3" stroke="#0a8c0a" stroke-width="1.15"/><path d="M1472.1 900.9L1479.9 893.3" stroke="#0a8c0a" stroke-width="1.15"/><path d="M1482.1 900.9L1489.9 893.3" stroke="#0a8c0a" stroke-width="1.15"/><path d="M1492.1 900.9L1499.9 893.3" stroke="#0a8c0a" stroke-width="1.15"/><path d="M1502.1 900.9L1509.9 893.3" stroke="#0a8c0a" stroke-width="1.15"/><path d="M1512.1 900.9L1519.9 893.3" stroke="#0a8c0a" stroke-width="1.15"/><path d="M1522.1 900.9L1529.9 893.3" stroke="#0a8c0a" stroke-width="1.15"/><path d="M1532.1 900.9L1539.9 893.3" stroke="#0a8c0a" stroke-width="1.15"/><path d="M1542.1 900.9L1549.9 893.3" stroke="#0a8c0a" stroke-width="1.15"/><path d="M1552.1 900.9L1559.9 893.3" stroke="#0a8c0a" stroke-width="1.15"/><path d="M1562.1 900.9L1569.9 893.3" stroke="#0a8c0a" stroke-width="1.15"/><path d="M1572.1 900.9L1579.9 893.3" stroke="#0a8c0a" stroke-width="1.15"/><path d="M1582.1 900.9L1589.9 893.3" stroke="#0a8c0a" stroke-width="1.15"/><path d="M1145.0 893.3L1152.6 900.9" stroke="#cc0000" stroke-width="1.15"/><path d="M1155.0 893.3L1162.6 900.9" stroke="#cc0000" stroke-width="1.15"/><path d="M1165.0 893.3L1172.6 900.9" stroke="#cc0000" stroke-width="1.15"/><path d="M1175.0 893.3L1182.6 900.9" stroke="#cc0000" stroke-width="1.15"/><path d="M1185.0 893.3L1192.6 900.9" stroke="#cc0000" stroke-width="1.15"/><path d="M1195.0 893.3L1202.6 900.9" stroke="#cc0000" stroke-width="1.15"/><path d="M1205.0 893.3L1212.6 900.9" stroke="#cc0000" stroke-width="1.15"/><path d="M1215.0 893.3L1222.6 900.9" stroke="#cc0000" stroke-width="1.15"/><path d="M1225.0 893.3L1232.6 900.9" stroke="#cc0000" stroke-width="1.15"/><path d="M1235.0 893.3L1242.6 900.9" stroke="#cc0000" stroke-width="1.15"/><path d="M1245.0 893.3L1248.8 897" stroke="#cc0000" stroke-width="1.15"/><path d="M586.0 894.3h7" stroke="#0000d0" stroke-width="1.5"/><path d="M1188.8 894.3h7" stroke="#0000d0" stroke-width="1.5"/><path d="M1419.0 894.3h7" stroke="#0000d0" stroke-width="1.5"/><path d="M1179.3 135V186" stroke="#1cb41c" stroke-width="1.2" stroke-dasharray="4 3.5"/><path d="M1584 135V186" stroke="#d8cc00" stroke-width="1.8" stroke-dasharray="4.5 3.5"/><path d="M1179.3 220V298" stroke="#1cb41c" stroke-width="1.2" stroke-dasharray="4 3.5"/><path d="M1584 220V298" stroke="#d8cc00" stroke-width="1.8" stroke-dasharray="4.5 3.5"/><path d="M1179.3 332V554" stroke="#1cb41c" stroke-width="1.2" stroke-dasharray="4 3.5"/><path d="M1584 332V554" stroke="#d8cc00" stroke-width="1.8" stroke-dasharray="4.5 3.5"/><path d="M1179.3 588V892" stroke="#1cb41c" stroke-width="1.2" stroke-dasharray="4 3.5"/><path d="M1584 588V892" stroke="#d8cc00" stroke-width="1.8" stroke-dasharray="4.5 3.5"/><path d="M1857 134.0V186.0" stroke="#fff" stroke-width="1.6"/><path d="M1857 139.3H1867.5" stroke="#fff" stroke-width="1.4"/><path d="M1857 160.4H1867.5" stroke="#fff" stroke-width="1.4"/><path d="M1857 181.8H1867.5" stroke="#fff" stroke-width="1.4"/><path d="M1857 149.6H1861" stroke="#fff" stroke-width="1.4"/><path d="M1857 171.5H1861" stroke="#fff" stroke-width="1.4"/><text x="1914.5" y="165.9" font-size="15" fill="#e4e4e4" text-anchor="end" font-family="Liberation Sans">0</text><path d="M1857 219.0V298.0" stroke="#fff" stroke-width="1.6"/><path d="M1857 236.7H1867.5" stroke="#fff" stroke-width="1.4"/><path d="M1857 259.3H1867.5" stroke="#fff" stroke-width="1.4"/><path d="M1857 281.8H1867.5" stroke="#fff" stroke-width="1.4"/><path d="M1857 226.7H1861" stroke="#fff" stroke-width="1.4"/><path d="M1857 247.8H1861" stroke="#fff" stroke-width="1.4"/><path d="M1857 270.7H1861" stroke="#fff" stroke-width="1.4"/><path d="M1857 291.6H1861" stroke="#fff" stroke-width="1.4"/><text x="1914.5" y="242.3" font-size="15" fill="#e4e4e4" text-anchor="end" font-family="Liberation Sans">1000</text><text x="1914.5" y="264.9" font-size="15" fill="#e4e4e4" text-anchor="end" font-family="Liberation Sans">0</text><text x="1914.5" y="287.3" font-size="15" fill="#e4e4e4" text-anchor="end" font-family="Liberation Sans">-1000</text><path d="M1857 332.0V555.0" stroke="#fff" stroke-width="1.6"/><path d="M1857 337.6H1867.5" stroke="#fff" stroke-width="1.4"/><path d="M1857 361.1H1867.5" stroke="#fff" stroke-width="1.4"/><path d="M1857 384.6H1867.5" stroke="#fff" stroke-width="1.4"/><path d="M1857 408.0H1867.5" stroke="#fff" stroke-width="1.4"/><path d="M1857 431.4H1867.5" stroke="#fff" stroke-width="1.4"/><path d="M1857 454.9H1867.5" stroke="#fff" stroke-width="1.4"/><path d="M1857 478.4H1867.5" stroke="#fff" stroke-width="1.4"/><path d="M1857 501.8H1867.5" stroke="#fff" stroke-width="1.4"/><path d="M1857 525.2H1867.5" stroke="#fff" stroke-width="1.4"/><path d="M1857 548.7H1867.5" stroke="#fff" stroke-width="1.4"/><path d="M1857 349.4H1861" stroke="#fff" stroke-width="1.4"/><path d="M1857 372.8H1861" stroke="#fff" stroke-width="1.4"/><path d="M1857 396.3H1861" stroke="#fff" stroke-width="1.4"/><path d="M1857 419.7H1861" stroke="#fff" stroke-width="1.4"/><path d="M1857 443.2H1861" stroke="#fff" stroke-width="1.4"/><path d="M1857 466.6H1861" stroke="#fff" stroke-width="1.4"/><path d="M1857 490.1H1861" stroke="#fff" stroke-width="1.4"/><path d="M1857 513.5H1861" stroke="#fff" stroke-width="1.4"/><path d="M1857 537.0H1861" stroke="#fff" stroke-width="1.4"/><text x="1914.5" y="367.6" font-size="15" fill="#e4e4e4" text-anchor="end" font-family="Liberation Sans">20</text><text x="1914.5" y="391.1" font-size="15" fill="#e4e4e4" text-anchor="end" font-family="Liberation Sans">10</text><text x="1914.5" y="414.5" font-size="15" fill="#e4e4e4" text-anchor="end" font-family="Liberation Sans">0</text><text x="1914.5" y="437.9" font-size="15" fill="#e4e4e4" text-anchor="end" font-family="Liberation Sans">-10</text><text x="1914.5" y="461.4" font-size="15" fill="#e4e4e4" text-anchor="end" font-family="Liberation Sans">-20</text><text x="1914.5" y="484.9" font-size="15" fill="#e4e4e4" text-anchor="end" font-family="Liberation Sans">-30</text><text x="1914.5" y="508.3" font-size="15" fill="#e4e4e4" text-anchor="end" font-family="Liberation Sans">-40</text><text x="1914.5" y="531.8" font-size="15" fill="#e4e4e4" text-anchor="end" font-family="Liberation Sans">-50</text><path d="M1857 588.0V893.0" stroke="#fff" stroke-width="1.6"/><path d="M1857 870.4H1867.5" stroke="#fff" stroke-width="1.4"/><path d="M1857 837.3H1867.5" stroke="#fff" stroke-width="1.4"/><path d="M1857 804.1H1867.5" stroke="#fff" stroke-width="1.4"/><path d="M1857 771.0H1867.5" stroke="#fff" stroke-width="1.4"/><path d="M1857 737.9H1867.5" stroke="#fff" stroke-width="1.4"/><path d="M1857 704.8H1867.5" stroke="#fff" stroke-width="1.4"/><path d="M1857 671.6H1867.5" stroke="#fff" stroke-width="1.4"/><path d="M1857 638.5H1867.5" stroke="#fff" stroke-width="1.4"/><path d="M1857 605.4H1867.5" stroke="#fff" stroke-width="1.4"/><path d="M1857 890.3H1861" stroke="#fff" stroke-width="1.4"/><path d="M1857 883.6H1861" stroke="#fff" stroke-width="1.4"/><path d="M1857 877.0H1861" stroke="#fff" stroke-width="1.4"/><path d="M1857 863.8H1861" stroke="#fff" stroke-width="1.4"/><path d="M1857 857.1H1861" stroke="#fff" stroke-width="1.4"/><path d="M1857 850.5H1861" stroke="#fff" stroke-width="1.4"/><path d="M1857 843.9H1861" stroke="#fff" stroke-width="1.4"/><path d="M1857 830.6H1861" stroke="#fff" stroke-width="1.4"/><path d="M1857 824.0H1861" stroke="#fff" stroke-width="1.4"/><path d="M1857 817.4H1861" stroke="#fff" stroke-width="1.4"/><path d="M1857 810.8H1861" stroke="#fff" stroke-width="1.4"/><path d="M1857 797.5H1861" stroke="#fff" stroke-width="1.4"/><path d="M1857 790.9H1861" stroke="#fff" stroke-width="1.4"/><path d="M1857 784.3H1861" stroke="#fff" stroke-width="1.4"/><path d="M1857 777.6H1861" stroke="#fff" stroke-width="1.4"/><path d="M1857 764.4H1861" stroke="#fff" stroke-width="1.4"/><path d="M1857 757.8H1861" stroke="#fff" stroke-width="1.4"/><path d="M1857 751.1H1861" stroke="#fff" stroke-width="1.4"/><path d="M1857 744.5H1861" stroke="#fff" stroke-width="1.4"/><path d="M1857 731.3H1861" stroke="#fff" stroke-width="1.4"/><path d="M1857 724.6H1861" stroke="#fff" stroke-width="1.4"/><path d="M1857 718.0H1861" stroke="#fff" stroke-width="1.4"/><path d="M1857 711.4H1861" stroke="#fff" stroke-width="1.4"/><path d="M1857 698.1H1861" stroke="#fff" stroke-width="1.4"/><path d="M1857 691.5H1861" stroke="#fff" stroke-width="1.4"/><path d="M1857 684.9H1861" stroke="#fff" stroke-width="1.4"/><path d="M1857 678.3H1861" stroke="#fff" stroke-width="1.4"/><path d="M1857 665.0H1861" stroke="#fff" stroke-width="1.4"/><path d="M1857 658.4H1861" stroke="#fff" stroke-width="1.4"/><path d="M1857 651.8H1861" stroke="#fff" stroke-width="1.4"/><path d="M1857 645.1H1861" stroke="#fff" stroke-width="1.4"/><path d="M1857 631.9H1861" stroke="#fff" stroke-width="1.4"/><path d="M1857 625.3H1861" stroke="#fff" stroke-width="1.4"/><path d="M1857 618.6H1861" stroke="#fff" stroke-width="1.4"/><path d="M1857 612.0H1861" stroke="#fff" stroke-width="1.4"/><path d="M1857 598.8H1861" stroke="#fff" stroke-width="1.4"/><path d="M1857 592.1H1861" stroke="#fff" stroke-width="1.4"/><text x="1914.5" y="877.2" font-size="15" fill="#e4e4e4" text-anchor="end" font-family="Liberation Sans">3900</text><text x="1914.5" y="844.1" font-size="15" fill="#e4e4e4" text-anchor="end" font-family="Liberation Sans">3950</text><text x="1914.5" y="810.9" font-size="15" fill="#e4e4e4" text-anchor="end" font-family="Liberation Sans">4000</text><text x="1914.5" y="777.8" font-size="15" fill="#e4e4e4" text-anchor="end" font-family="Liberation Sans">4050</text><text x="1914.5" y="744.7" font-size="15" fill="#e4e4e4" text-anchor="end" font-family="Liberation Sans">4100</text><text x="1914.5" y="711.6" font-size="15" fill="#e4e4e4" text-anchor="end" font-family="Liberation Sans">4150</text><text x="1914.5" y="678.4" font-size="15" fill="#e4e4e4" text-anchor="end" font-family="Liberation Sans">4200</text><text x="1914.5" y="645.3" font-size="15" fill="#e4e4e4" text-anchor="end" font-family="Liberation Sans">4250</text><text x="1914.5" y="612.2" font-size="15" fill="#e4e4e4" text-anchor="end" font-family="Liberation Sans">4300</text><rect x="1861.7" y="620.8" width="60" height="20.6" fill="#000" stroke="#fff" stroke-width="1.4"/><text x="1864" y="636" font-size="13.3" fill="#e00000" font-family="Liberation Sans">4260.840</text><path d="M37 901.8H1857" stroke="#fff" stroke-width="1.5"/><path d="M37 922H1857" stroke="#fff" stroke-width="1.5"/><path d="M61.0 901.8V923.0" stroke="#fff" stroke-width="1.5"/><text x="63.4" y="916.7" font-size="15.2" fill="#f0f0f0" font-family="Liberation Sans">26</text><path d="M169.8 901.8V923.0" stroke="#fff" stroke-width="1.5"/><text x="172.2" y="916.7" font-size="15.2" fill="#f0f0f0" font-family="Liberation Sans">27</text><path d="M278.6 901.8V923.0" stroke="#fff" stroke-width="1.5"/><text x="281.0" y="916.7" font-size="15.2" fill="#f0f0f0" font-family="Liberation Sans">28</text><path d="M387.3 901.8V923.0" stroke="#fff" stroke-width="1.5"/><text x="389.7" y="916.7" font-size="15.2" fill="#f0f0f0" font-family="Liberation Sans">29</text><path d="M496.1 901.8V941.0" stroke="#fff" stroke-width="1.5"/><text x="498.5" y="916.7" font-size="15.2" fill="#f0f0f0" font-family="Liberation Sans">1</text><path d="M604.9 901.8V923.0" stroke="#fff" stroke-width="1.5"/><text x="607.3" y="916.7" font-size="15.2" fill="#f0f0f0" font-family="Liberation Sans">2</text><path d="M713.7 901.8V923.0" stroke="#fff" stroke-width="1.5"/><text x="716.1" y="916.7" font-size="15.2" fill="#f0f0f0" font-family="Liberation Sans">3</text><path d="M822.5 901.8V923.0" stroke="#fff" stroke-width="1.5"/><text x="824.9" y="916.7" font-size="15.2" fill="#f0f0f0" font-family="Liberation Sans">4</text><path d="M931.2 901.8V923.0" stroke="#fff" stroke-width="1.5"/><text x="933.6" y="916.7" font-size="15.2" fill="#f0f0f0" font-family="Liberation Sans">5</text><path d="M1040.0 901.8V923.0" stroke="#fff" stroke-width="1.5"/><text x="1042.4" y="916.7" font-size="15.2" fill="#f0f0f0" font-family="Liberation Sans">8</text><path d="M1148.8 901.8V923.0" stroke="#fff" stroke-width="1.5"/><text x="1151.2" y="916.7" font-size="15.2" fill="#f0f0f0" font-family="Liberation Sans">9</text><path d="M1257.6 901.8V923.0" stroke="#fff" stroke-width="1.5"/><text x="1260.0" y="916.7" font-size="15.2" fill="#f0f0f0" font-family="Liberation Sans">10</text><path d="M1366.4 901.8V923.0" stroke="#fff" stroke-width="1.5"/><text x="1368.8" y="916.7" font-size="15.2" fill="#f0f0f0" font-family="Liberation Sans">11</text><path d="M1475.1 901.8V923.0" stroke="#fff" stroke-width="1.5"/><text x="1477.5" y="916.7" font-size="15.2" fill="#f0f0f0" font-family="Liberation Sans">12</text><path d="M1583.9 901.8V923.0" stroke="#fff" stroke-width="1.5"/><text x="1586.3" y="916.7" font-size="15.2" fill="#f0f0f0" font-family="Liberation Sans">15</text><path d="M45.5 901.8V908.2" stroke="#fff" stroke-width="1.4"/><path d="M92.1 901.8V908.2" stroke="#fff" stroke-width="1.4"/><path d="M107.6 901.8V908.2" stroke="#fff" stroke-width="1.4"/><path d="M123.2 901.8V908.2" stroke="#fff" stroke-width="1.4"/><path d="M138.7 901.8V908.2" stroke="#fff" stroke-width="1.4"/><path d="M154.2 901.8V908.2" stroke="#fff" stroke-width="1.4"/><path d="M200.9 901.8V908.2" stroke="#fff" stroke-width="1.4"/><path d="M216.4 901.8V908.2" stroke="#fff" stroke-width="1.4"/><path d="M231.9 901.8V908.2" stroke="#fff" stroke-width="1.4"/><path d="M247.5 901.8V908.2" stroke="#fff" stroke-width="1.4"/><path d="M263.0 901.8V908.2" stroke="#fff" stroke-width="1.4"/><path d="M309.6 901.8V908.2" stroke="#fff" stroke-width="1.4"/><path d="M325.2 901.8V908.2" stroke="#fff" stroke-width="1.4"/><path d="M340.7 901.8V908.2" stroke="#fff" stroke-width="1.4"/><path d="M356.3 901.8V908.2" stroke="#fff" stroke-width="1.4"/><path d="M371.8 901.8V908.2" stroke="#fff" stroke-width="1.4"/><path d="M418.4 901.8V908.2" stroke="#fff" stroke-width="1.4"/><path d="M434.0 901.8V908.2" stroke="#fff" stroke-width="1.4"/><path d="M449.5 901.8V908.2" stroke="#fff" stroke-width="1.4"/><path d="M465.0 901.8V908.2" stroke="#fff" stroke-width="1.4"/><path d="M480.6 901.8V908.2" stroke="#fff" stroke-width="1.4"/><path d="M511.7 901.8V908.2" stroke="#fff" stroke-width="1.4"/><path d="M527.2 901.8V908.2" stroke="#fff" stroke-width="1.4"/><path d="M542.7 901.8V908.2" stroke="#fff" stroke-width="1.4"/><path d="M558.3 901.8V908.2" stroke="#fff" stroke-width="1.4"/><path d="M573.8 901.8V908.2" stroke="#fff" stroke-width="1.4"/><path d="M589.4 901.8V908.2" stroke="#fff" stroke-width="1.4"/><path d="M620.4 901.8V908.2" stroke="#fff" stroke-width="1.4"/><path d="M636.0 901.8V908.2" stroke="#fff" stroke-width="1.4"/><path d="M651.5 901.8V908.2" stroke="#fff" stroke-width="1.4"/><path d="M667.1 901.8V908.2" stroke="#fff" stroke-width="1.4"/><path d="M682.6 901.8V908.2" stroke="#fff" stroke-width="1.4"/><path d="M698.1 901.8V908.2" stroke="#fff" stroke-width="1.4"/><path d="M729.2 901.8V908.2" stroke="#fff" stroke-width="1.4"/><path d="M744.8 901.8V908.2" stroke="#fff" stroke-width="1.4"/><path d="M760.3 901.8V908.2" stroke="#fff" stroke-width="1.4"/><path d="M775.8 901.8V908.2" stroke="#fff" stroke-width="1.4"/><path d="M791.4 901.8V908.2" stroke="#fff" stroke-width="1.4"/><path d="M806.9 901.8V908.2" stroke="#fff" stroke-width="1.4"/><path d="M838.0 901.8V908.2" stroke="#fff" stroke-width="1.4"/><path d="M853.5 901.8V908.2" stroke="#fff" stroke-width="1.4"/><path d="M869.1 901.8V908.2" stroke="#fff" stroke-width="1.4"/><path d="M884.6 901.8V908.2" stroke="#fff" stroke-width="1.4"/><path d="M900.2 901.8V908.2" stroke="#fff" stroke-width="1.4"/><path d="M915.7 901.8V908.2" stroke="#fff" stroke-width="1.4"/><path d="M946.8 901.8V908.2" stroke="#fff" stroke-width="1.4"/><path d="M962.3 901.8V908.2" stroke="#fff" stroke-width="1.4"/><path d="M977.9 901.8V908.2" stroke="#fff" stroke-width="1.4"/><path d="M993.4 901.8V908.2" stroke="#fff" stroke-width="1.4"/><path d="M1008.9 901.8V908.2" stroke="#fff" stroke-width="1.4"/><path d="M1024.5 901.8V908.2" stroke="#fff" stroke-width="1.4"/><path d="M1055.6 901.8V908.2" stroke="#fff" stroke-width="1.4"/><path d="M1071.1 901.8V908.2" stroke="#fff" stroke-width="1.4"/><path d="M1086.6 901.8V908.2" stroke="#fff" stroke-width="1.4"/><path d="M1102.2 901.8V908.2" stroke="#fff" stroke-width="1.4"/><path d="M1117.7 901.8V908.2" stroke="#fff" stroke-width="1.4"/><path d="M1133.3 901.8V908.2" stroke="#fff" stroke-width="1.4"/><path d="M1164.3 901.8V908.2" stroke="#fff" stroke-width="1.4"/><path d="M1179.9 901.8V908.2" stroke="#fff" stroke-width="1.4"/><path d="M1195.4 901.8V908.2" stroke="#fff" stroke-width="1.4"/><path d="M1211.0 901.8V908.2" stroke="#fff" stroke-width="1.4"/><path d="M1226.5 901.8V908.2" stroke="#fff" stroke-width="1.4"/><path d="M1242.0 901.8V908.2" stroke="#fff" stroke-width="1.4"/><path d="M1288.7 901.8V908.2" stroke="#fff" stroke-width="1.4"/><path d="M1304.2 901.8V908.2" stroke="#fff" stroke-width="1.4"/><path d="M1319.7 901.8V908.2" stroke="#fff" stroke-width="1.4"/><path d="M1335.3 901.8V908.2" stroke="#fff" stroke-width="1.4"/><path d="M1350.8 901.8V908.2" stroke="#fff" stroke-width="1.4"/><path d="M1397.4 901.8V908.2" stroke="#fff" stroke-width="1.4"/><path d="M1413.0 901.8V908.2" stroke="#fff" stroke-width="1.4"/><path d="M1428.5 901.8V908.2" stroke="#fff" stroke-width="1.4"/><path d="M1444.1 901.8V908.2" stroke="#fff" stroke-width="1.4"/><path d="M1459.6 901.8V908.2" stroke="#fff" stroke-width="1.4"/><path d="M1506.2 901.8V908.2" stroke="#fff" stroke-width="1.4"/><path d="M1521.8 901.8V908.2" stroke="#fff" stroke-width="1.4"/><path d="M1537.3 901.8V908.2" stroke="#fff" stroke-width="1.4"/><path d="M1552.8 901.8V908.2" stroke="#fff" stroke-width="1.4"/><path d="M1568.4 901.8V908.2" stroke="#fff" stroke-width="1.4"/><path d="M1615.0 901.8V908.2" stroke="#fff" stroke-width="1.4"/><path d="M1630.5 901.8V908.2" stroke="#fff" stroke-width="1.4"/><path d="M1646.1 901.8V908.2" stroke="#fff" stroke-width="1.4"/><path d="M1661.6 901.8V908.2" stroke="#fff" stroke-width="1.4"/><path d="M1677.2 901.8V908.2" stroke="#fff" stroke-width="1.4"/><path d="M1692.7 901.8V908.2" stroke="#fff" stroke-width="1.4"/><path d="M1708.2 901.8V908.2" stroke="#fff" stroke-width="1.4"/><path d="M1723.8 901.8V908.2" stroke="#fff" stroke-width="1.4"/><path d="M1739.3 901.8V908.2" stroke="#fff" stroke-width="1.4"/><path d="M1754.9 901.8V908.2" stroke="#fff" stroke-width="1.4"/><path d="M1770.4 901.8V908.2" stroke="#fff" stroke-width="1.4"/><path d="M1785.9 901.8V908.2" stroke="#fff" stroke-width="1.4"/><path d="M1832.6 901.8V908.2" stroke="#fff" stroke-width="1.4"/><path d="M1848.1 901.8V908.2" stroke="#fff" stroke-width="1.4"/><path d="M1801.5 901.8V923" stroke="#fff" stroke-width="1.5"/><text x="1803.9" y="916.7" font-size="15.2" fill="#f0f0f0" font-family="Liberation Sans">16</text><text x="498" y="936.6" font-size="15.2" fill="#f0f0f0" font-family="Liberation Sans">August</text></svg><svg class="abs" style="left:1660px;top:943px" width="260" height="29" viewBox="1660 943 260 29"><path d="M1667.9 946V965.500" stroke="#8a8a8a" stroke-width="1.500"/><path d="M1678.500 955.500A6.200 6.200 0 0 1 1689.500 952.200" fill="none" stroke="#4e4e4e" stroke-width="2.800"/><path d="M1692 948.500v6.500h-6.500z" fill="#4e4e4e"/><path d="M1690.700 956.800A6.200 6.200 0 0 1 1679.700 960" fill="none" stroke="#4e4e4e" stroke-width="2.800"/><path d="M1677.200 963.800v-6.500h6.500z" fill="#4e4e4e"/><path d="M1710.800 951V961.500" stroke="#4e4e4e" stroke-width="2.200"/><path d="M1727.7 946V965.500" stroke="#8a8a8a" stroke-width="1.500"/><path d="M1744.600 952V960" stroke="#4e4e4e" stroke-width="2.200"/><path d="M1744.600 949.200l4 4.600h-8zM1744.600 962.600l4-4.600h-8z" fill="#4e4e4e"/><path d="M1771 950.500V961.500M1765.500 956H1776.500" stroke="#4e4e4e" stroke-width="2.200"/><path d="M1771 947.300l3.600 4.200h-7.200zM1771 964.700l3.600-4.200h-7.200zM1762.300 956l4.200-3.600v7.200zM1779.700 956l-4.200-3.600v7.200z" fill="#4e4e4e"/><circle cx="1797.200" cy="956.200" r="6.800" fill="#f2f2f2" stroke="#9c9c9c" stroke-width="1.600"/><path d="M1793.500 956.200h7.400" stroke="#4e4e4e" stroke-width="2.200"/><circle cx="1823.400" cy="956.200" r="6.800" fill="#f2f2f2" stroke="#9c9c9c" stroke-width="1.600"/><path d="M1819.700 956.200h7.400M1823.400 952.500v7.400" stroke="#4e4e4e" stroke-width="2.200"/><path d="M1840.4 946V965.500" stroke="#8a8a8a" stroke-width="1.500"/><path d="M1860 951.500v10.500l-6.500-5.250z" fill="#c6c6c6"/><path d="M1881 951.500v10.500l6.500-5.250z" fill="#c6c6c6"/><rect x="1901.500" y="949.500" width="14" height="13.500" fill="#f4f4f4" stroke="#5a5a5a" stroke-width="1.500"/><path d="M1901.500 952.500h14" stroke="#5a5a5a" stroke-width="1.800"/><path d="M1903.500 955.500h2M1907 955.500h7M1903.500 958h2M1907 958h7M1903.500 960.500h2M1907 960.500h7" stroke="#7a7a7a" stroke-width="1.100"/></svg><div class="abs" style="left:0;top:972px;width:1920px;height:39px;background:#ececec;border-top:1px solid #fafafa"></div><div class="abs" style="left:0;top:1011px;width:1920px;height:1.500px;background:#bcbcbc"></div><div class="abs" style="left:0;top:1012.500px;width:1920px;height:1.500px;background:#f2f2f2"></div><div class="abs" style="left:0;top:1014px;width:1920px;height:6px;background:#444"></div><div class="abs" style="left:1842px;top:1017.500px;width:25px;height:2.500px;background:#f4f4f4"></div><div class="abs" style="left:1872px;top:1017.500px;width:25px;height:2.500px;background:#e4e8ee"></div><svg class="abs" style="left:0;top:972px" width="720" height="40" viewBox="0 972 720 40"><rect x="0.0" y="975" width="9" height="36" fill="url(#gGrip)"/><rect x="2.6" y="992.500" width="3" height="3.400" fill="#555"/><path d="M9.6 975V1011" stroke="#8a8a8a" stroke-width="1.200"/><rect x="11" y="981.500" width="161" height="24" rx="2" fill="#fff" stroke="#9c9c9c" stroke-width="1.400"/><path d="M30 994H131.500" stroke="#3a3a3a" stroke-width="1.400"/><path d="M156 991.500l5 5l5-5" fill="none" stroke="#5a5a5a" stroke-width="1.400"/><path d="M175.500 979V1007" stroke="#8a8a8a" stroke-width="1.200"/><rect x="181" y="981.500" width="123.500" height="24" rx="2" fill="#fff" stroke="#9c9c9c" stroke-width="1.400"/><path d="M195 994H269" stroke="#3a3a3a" stroke-width="1.400"/><path d="M288.500 991.500l5 5l5-5" fill="none" stroke="#5a5a5a" stroke-width="1.400"/><path d="M313 974V1011" stroke="#c4c4c4" stroke-width="1.400"/><path d="M314.500 974V1011" stroke="#fafafa" stroke-width="1"/><rect x="321.0" y="975" width="9" height="36" fill="url(#gGrip)"/><rect x="323.6" y="992.500" width="3" height="3.400" fill="#555"/><path d="M330.6 975V1011" stroke="#8a8a8a" stroke-width="1.200"/><rect x="332" y="977" width="134" height="34" fill="#f0f0f0"/><rect x="334.5" y="980.500" width="12" height="12" fill="#e6e6fa" stroke="#a8a8a8" stroke-width="1"/><rect x="349.5" y="980.500" width="12" height="12" fill="#ffd700" stroke="#a8a8a8" stroke-width="1"/><rect x="364.5" y="980.500" width="12" height="12" fill="#ffff00" stroke="#a8a8a8" stroke-width="1"/><rect x="379.5" y="980.500" width="12" height="12" fill="#696969" stroke="#a8a8a8" stroke-width="1"/><rect x="394.5" y="980.500" width="12" height="12" fill="#32cd32" stroke="#a8a8a8" stroke-width="1"/><rect x="409.5" y="980.500" width="12" height="12" fill="#ffffe0" stroke="#a8a8a8" stroke-width="1"/><rect x="424.5" y="980.500" width="12" height="12" fill="#ff6820" stroke="#a8a8a8" stroke-width="1"/><rect x="438.8" y="980.500" width="12" height="12" fill="#98fb98" stroke="#a8a8a8" stroke-width="1"/><rect x="334.5" y="995.500" width="12" height="12" fill="#8b0000" stroke="#a8a8a8" stroke-width="1"/><rect x="349.5" y="995.500" width="12" height="12" fill="#688290" stroke="#a8a8a8" stroke-width="1"/><rect x="364.5" y="995.500" width="12" height="12" fill="#0000ff" stroke="#a8a8a8" stroke-width="1"/><rect x="379.5" y="995.500" width="12" height="12" fill="#009200" stroke="#a8a8a8" stroke-width="1"/><rect x="394.5" y="995.500" width="12" height="12" fill="#ff0000" stroke="#fff" stroke-width="1" stroke-dasharray="1 1"/><rect x="409.5" y="995.500" width="12" height="12" fill="#000000" stroke="#a8a8a8" stroke-width="1"/><rect x="424.5" y="995.500" width="12" height="12" fill="#3a7ca6" stroke="#a8a8a8" stroke-width="1"/><rect x="438.8" y="995.500" width="12" height="12" fill="#8cd0e2" stroke="#a8a8a8" stroke-width="1"/><path d="M454.700 991.800h6.600l-3.300 3.600z" fill="#111"/><path d="M474.700 974V1011" stroke="#c4c4c4" stroke-width="1.400"/><path d="M476.200 974V1011" stroke="#fafafa" stroke-width="1"/><rect x="482.0" y="975" width="9" height="36" fill="url(#gGrip)"/><rect x="484.6" y="992.500" width="3" height="3.400" fill="#555"/><path d="M491.6 975V1011" stroke="#8a8a8a" stroke-width="1.200"/><rect x="498.7" y="988" width="19.500" height="15" rx="1" fill="#fff" stroke="#9ab4cc" stroke-width="1.300"/><path d="M500.7 989.500h6" stroke="#b8cce0" stroke-width="1.600"/><path d="M501.2 998.500l3.500-3l2.500 1.200" fill="none" stroke="#d83030" stroke-width="1.300"/><text x="512.7" y="1002" font-size="14" fill="#222" font-family="Liberation Serif" text-anchor="middle">1</text><rect x="532.3" y="988" width="19.500" height="15" rx="1" fill="#fff" stroke="#9ab4cc" stroke-width="1.300"/><path d="M534.3 989.500h6" stroke="#b8cce0" stroke-width="1.600"/><path d="M534.8 998.500l3.500-3l2.500 1.200" fill="none" stroke="#d83030" stroke-width="1.300"/><text x="546.3" y="1002" font-size="14" fill="#222" font-family="Liberation Serif" text-anchor="middle">2</text><rect x="566.0" y="988" width="19.500" height="15" rx="1" fill="#fff" stroke="#9ab4cc" stroke-width="1.300"/><path d="M568.0 989.500h6" stroke="#b8cce0" stroke-width="1.600"/><path d="M568.5 998.500l3.500-3l2.500 1.200" fill="none" stroke="#d83030" stroke-width="1.300"/><text x="580.0" y="1002" font-size="14" fill="#222" font-family="Liberation Serif" text-anchor="middle">3</text><rect x="599.6" y="988" width="19.500" height="15" rx="1" fill="#fff" stroke="#9ab4cc" stroke-width="1.300"/><path d="M601.6 989.500h6" stroke="#b8cce0" stroke-width="1.600"/><path d="M602.1 998.500l3.500-3l2.500 1.200" fill="none" stroke="#d83030" stroke-width="1.300"/><text x="613.6" y="1002" font-size="14" fill="#222" font-family="Liberation Serif" text-anchor="middle">4</text><rect x="633.3" y="988" width="19.500" height="15" rx="1" fill="#fff" stroke="#9ab4cc" stroke-width="1.300"/><path d="M635.3 989.500h6" stroke="#b8cce0" stroke-width="1.600"/><path d="M635.8 998.500l3.500-3l2.500 1.200" fill="none" stroke="#d83030" stroke-width="1.300"/><text x="647.3" y="1002" font-size="14" fill="#222" font-family="Liberation Serif" text-anchor="middle">5</text><rect x="666.9" y="988" width="19.500" height="15" rx="1" fill="#fff" stroke="#9ab4cc" stroke-width="1.300"/><path d="M668.9 989.500h6" stroke="#b8cce0" stroke-width="1.600"/><path d="M669.4 998.500l3.500-3l2.500 1.200" fill="none" stroke="#d83030" stroke-width="1.300"/><text x="680.9" y="1002" font-size="14" fill="#222" font-family="Liberation Serif" text-anchor="middle">6</text><path d="M703.200 974V1011" stroke="#b4b4b4" stroke-width="1.400"/><path d="M704.700 974V1011" stroke="#fafafa" stroke-width="1"/></svg><div id="task" class="abs" style="top:1020px;height:60px"></div><svg class="abs" style="left:0;top:1020px" width="1920" height="60" viewBox="0 1020 1920 60"><defs><linearGradient id="gSun" x1="0" y1="0" x2="0.300" y2="1"><stop offset="0" stop-color="#ffc400"/><stop offset="1" stop-color="#e85e00"/></linearGradient><linearGradient id="gWin" x1="0" y1="0" x2="1" y2="1"><stop offset="0" stop-color="#86e4fc"/><stop offset="1" stop-color="#0896f0"/></linearGradient><linearGradient id="gTeams" x1="0" y1="0" x2="1" y2="1"><stop offset="0" stop-color="#8a6ad8"/><stop offset="1" stop-color="#4c5ac8"/></linearGradient><linearGradient id="gMS" x1="0" y1="0" x2="0" y2="1"><stop offset="0" stop-color="#5a5a5a"/><stop offset="0.450" stop-color="#1a1a1a"/><stop offset="1" stop-color="#000"/></linearGradient><linearGradient id="gFold" x1="0" y1="0" x2="0" y2="1"><stop offset="0" stop-color="#ffd45a"/><stop offset="1" stop-color="#f4b41a"/></linearGradient></defs><circle cx="40.700" cy="1050" r="12.500" fill="url(#gSun)"/><rect x="505.8" y="1035.8" width="13.800" height="13.800" rx="1" fill="url(#gWin)"/><rect x="521.2" y="1035.8" width="13.800" height="13.800" rx="1" fill="url(#gWin)"/><rect x="505.8" y="1051.2" width="13.800" height="13.800" rx="1" fill="url(#gWin)"/><rect x="521.2" y="1051.2" width="13.800" height="13.800" rx="1" fill="url(#gWin)"/><circle cx="577.500" cy="1048.500" r="10" fill="#3a3840" stroke="#f4f4f4" stroke-width="3"/><path d="M570.500 1056L565.500 1062" stroke="#e4e4e4" stroke-width="3.400" stroke-linecap="round"/><circle cx="630.500" cy="1049.500" r="14" fill="url(#gTeams)"/><path d="M618 1058l-1 5.500l7-2.500z" fill="#5a5ec8"/><rect x="622.500" y="1044" width="10.500" height="10.500" rx="2" fill="#fff"/><path d="M634 1048.500l4.500-3v8.500l-4.500-3z" fill="#fff"/><rect x="671.0" y="1036" width="29.500" height="28.500" rx="2.500" fill="url(#gMS)"/><path d="M678.5 1062v-10.500h3v10.500zM683.5 1062v-17h3.200l1-2v19zM688.5 1062l1.500-24.500h3.500l-1.500 24.500z" fill="#f07818"/><path d="M726 1041.500q0-2 2-2h8.500l3 3h14.500q2 0 2 2v4h-30z" fill="#e8a818"/><rect x="726" y="1044.500" width="30" height="18.500" rx="1.500" fill="url(#gFold)"/><rect x="731.500" y="1056" width="19" height="7" rx="1.500" fill="#1a8ae0"/><path d="M735 1059.500h12" stroke="#0c5eb0" stroke-width="1.300"/><rect x="794.0" y="1039" width="15" height="21.500" fill="#fff" stroke="#2a5aa8" stroke-width="1.200"/><path d="M799 1043h6.500M799 1046h6.500M799 1049h6.500M799 1052h6.500M799 1055h6.500M799 1058h6.500" stroke="#2a5aa8" stroke-width="1.400"/><path d="M782.0 1039.500l16-3v26l-16-3z" fill="#2a5aa8"/><text x="790.0" y="1055" font-size="14.500" font-weight="bold" fill="#fff" text-anchor="middle" font-family="Liberation Sans">W</text><rect x="792" y="1071" width="8" height="3" rx="1.500" fill="#8e8e8e"/><path d="M850.5 1050.0L838.8 1043.2A13.5 13.5 0 0 1 862.2 1043.2Z" fill="#ea4335"/><path d="M850.5 1050.0L862.2 1043.2A13.5 13.5 0 0 1 850.5 1063.5Z" fill="#fbbc05"/><path d="M850.5 1050.0L850.5 1063.5A13.5 13.5 0 0 1 838.8 1043.2Z" fill="#34a853"/><circle cx="850.5" cy="1050.0" r="6.3" fill="#fff"/><circle cx="850.5" cy="1050.0" r="5.0" fill="#4285f4"/><circle cx="861.800" cy="1039.300" r="9.500" fill="#f06a10"/><text x="861.800" y="1043.300" font-size="11" font-weight="bold" fill="#ffd8b0" text-anchor="middle" font-family="Liberation Sans">N</text><rect x="847" y="1071" width="8" height="3" rx="1.500" fill="#8e8e8e"/><rect x="904.0" y="1039" width="15" height="21.500" fill="#fff" stroke="#d04424" stroke-width="1.200"/><circle cx="913" cy="1047" r="4" fill="none" stroke="#d04424" stroke-width="1.400"/><path d="M907.500 1054h10M907.500 1057h10" stroke="#d04424" stroke-width="1.400"/><path d="M892.0 1039.500l16-3v26l-16-3z" fill="#d04424"/><text x="900.0" y="1055" font-size="14.500" font-weight="bold" fill="#fff" text-anchor="middle" font-family="Liberation Sans">P</text><path d="M961 1036l7.500 21h-15z" fill="#f08a10"/><path d="M957.700 1045.500h6.600l1.500 4.300h-9.600zM955 1053.500h12l1 3h-14z" fill="#f4f4f4"/><path d="M949.500 1063.500l3-7h17l3 7z" fill="#e87a08"/><circle cx="1016" cy="1050" r="14.500" fill="#1c7ad8"/><path d="M1002 1052q0-15 15-15q12 0 13.500 11q-3-5-10-5q-9 0-9 8q0 5 5 8q-14 2-14.500-7z" fill="#3cc8c0"/><path d="M1011 1052q1-6 8-6q5 0 7 3q-1 4-7 4q-4 0-4 2q2 5 9 3q-4 6.500-10 5q-4-3-3-11z" fill="#0c4aa0"/><rect x="1069.5" y="1039" width="15" height="21.500" fill="#fff" stroke="#3a5aa8" stroke-width="1.200"/><rect x="1074" y="1042" width="4" height="4" fill="none" stroke="#3a5aa8" stroke-width="1.200"/><circle cx="1079.500" cy="1052" r="2.200" fill="none" stroke="#3a5aa8" stroke-width="1.200"/><path d="M1073.500 1057l2.500-3l2.500 3z" fill="none" stroke="#3a5aa8" stroke-width="1.200"/><path d="M1057.5 1039.500l16-3v26l-16-3z" fill="#3a5aa8"/><text x="1065.5" y="1055" font-size="14.500" font-weight="bold" fill="#fff" text-anchor="middle" font-family="Liberation Sans">V</text><rect x="1124.5" y="1039" width="15" height="21.500" fill="#fff" stroke="#1e7a44" stroke-width="1.200"/><path d="M1129 1043h7M1129 1047h7M1129 1051h7M1129 1055h7M1132.500 1041v17" stroke="#1e7a44" stroke-width="1.300"/><path d="M1112.5 1039.500l16-3v26l-16-3z" fill="#1e7a44"/><text x="1120.5" y="1055" font-size="14.500" font-weight="bold" fill="#fff" text-anchor="middle" font-family="Liberation Sans">X</text><rect x="1121.500" y="1071" width="8" height="3" rx="1.500" fill="#8e8e8e"/><path d="M1180.5 1050.5L1168.4 1043.5A14.0 14.0 0 0 1 1192.6 1043.5Z" fill="#ea4335"/><path d="M1180.5 1050.5L1192.6 1043.5A14.0 14.0 0 0 1 1180.5 1064.5Z" fill="#fbbc05"/><path d="M1180.5 1050.5L1180.5 1064.5A14.0 14.0 0 0 1 1168.4 1043.5Z" fill="#34a853"/><circle cx="1180.5" cy="1050.5" r="6.6" fill="#fff"/><circle cx="1180.5" cy="1050.5" r="5.2" fill="#4285f4"/><rect x="1224" y="1036" width="23.500" height="29" rx="2" fill="#7a8694"/><rect x="1227" y="1039" width="17.500" height="6" fill="#5ac8e8"/><rect x="1227.0" y="1047.5" width="4.500" height="4.500" fill="#e8ecf0"/><rect x="1233.5" y="1047.5" width="4.500" height="4.500" fill="#e8ecf0"/><rect x="1240.0" y="1047.5" width="4.500" height="4.500" fill="#e8ecf0"/><rect x="1227.0" y="1053.3" width="4.500" height="4.500" fill="#e8ecf0"/><rect x="1233.5" y="1053.3" width="4.500" height="4.500" fill="#e8ecf0"/><rect x="1240.0" y="1053.3" width="4.500" height="4.500" fill="#2a78d0"/><rect x="1227.0" y="1059.1" width="4.500" height="4.500" fill="#e8ecf0"/><rect x="1233.5" y="1059.1" width="4.500" height="4.500" fill="#e8ecf0"/><rect x="1240.0" y="1059.1" width="4.500" height="4.500" fill="#2a78d0"/><rect x="1276" y="1036" width="30" height="29" fill="#0e7c7c"/><path d="M1283 1061.500h16l-1.500-5h-13zM1282.500 1047.500q-1 4 3 8h11q4-4 3-8q-3-2.500-6 1h-5q-3-3.500-6-1zM1290 1040.500h2v2.500h2.500v2h-2.500v2.500h-2v-2.500h-2.500v-2h2.500z" fill="#fff"/><rect x="1321" y="1025" width="50" height="49" rx="4" fill="#35323b" stroke="#403d46" stroke-width="1"/><rect x="1331.5" y="1036" width="29.500" height="28.500" rx="2.500" fill="url(#gMS)"/><path d="M1339.0 1062v-10.500h3v10.500zM1344.0 1062v-17h3.200l1-2v19zM1349.0 1062l1.500-24.500h3.500l-1.500 24.500z" fill="#f07818"/><rect x="1336" y="1070.500" width="20" height="3" rx="1.500" fill="#4cc2ff"/><rect x="1386.500" y="1036.500" width="29" height="28.500" rx="3.500" fill="#241a20" stroke="#8a1422" stroke-width="1.600"/><text x="1401" y="1059" font-size="13.500" fill="#c01830" text-anchor="middle" font-family="Liberation Sans">Pro</text><path d="M1392 1043h2M1404 1041h5M1406.500 1039.500l2.500 1.500l-2.500 1.500" stroke="#c01830" stroke-width="1.100" fill="none"/><rect x="1397" y="1071" width="8" height="3" rx="1.500" fill="#8e8e8e"/><path d="M1663.500 1054l7.500-7.500l7.500 7.500" fill="none" stroke="#f0f0f0" stroke-width="1.500"/><path d="M1693 1055.500q-3-1-1.500-5q2-3.500 5-2q2-5 7-4q4 1.500 3.500 6q2 1 1 3.500q-1 1.500-3 1.500z" fill="#c8c8c8"/><circle cx="1705.600" cy="1055" r="5.600" fill="#e01828"/><path d="M1703.400 1052.800l4.400 4.400M1707.800 1052.800l-4.400 4.400" stroke="#fff" stroke-width="1.500"/><circle cx="1735.800" cy="1055.500" r="1.700" fill="#f0f0f0"/><path d="M1731.700 1051.800a5.800 5.800 0 0 1 8.200 0M1728.700 1048.500a10 10 0 0 1 14.200 0M1725.700 1045.500a14.300 14.300 0 0 1 20.200 0" fill="none" stroke="#f0f0f0" stroke-width="1.600" stroke-linecap="round"/><path d="M1757 1047h3.500l4.500-4v14l-4.500-4h-3.500z" fill="none" stroke="#f0f0f0" stroke-width="1.400" stroke-linejoin="round"/><path d="M1767.500 1046.500a4.500 4.500 0 0 1 0 7M1770 1044a8 8 0 0 1 0 12" fill="none" stroke="#f0f0f0" stroke-width="1.400"/><path d="M1772.800 1041.500a11.500 11.500 0 0 1 0 17" fill="none" stroke="#6a6a72" stroke-width="1.400"/><rect x="1790.500" y="1044.500" width="13" height="11" rx="2" fill="none" stroke="#f0f0f0" stroke-width="1.600"/><rect x="1804" y="1047.500" width="2.200" height="5" fill="#f0f0f0"/><rect x="1792.500" y="1046.500" width="4" height="7" fill="#f0f0f0"/><path d="M1787.300 1041v3M1790.300 1041v3M1786 1044h5.600v3.500q-2.800 2.500-5.600 0zM1788.800 1049v7h3" fill="none" stroke="#f0f0f0" stroke-width="1.400"/></svg><span id="tk1" class="fit" style="left:65.5px;top:1031.5px;font-size:15.50px;color:#fff;transform:scaleX(0.9093);">25&deg;C</span><span id="tk2" class="fit" style="left:65.5px;top:1051.5px;font-size:15.50px;color:#fff;transform:scaleX(0.9149);">Sol</span><span id="tk3" class="fit" style="left:1866.8px;top:1029.8px;font-size:15.00px;color:#fff;transform:scaleX(0.8842);">14:47</span><span id="tk4" class="fit" style="left:1825.5px;top:1051.0px;font-size:15.00px;color:#fff;transform:scaleX(0.9923);">15/08/2022</span></body></html>
